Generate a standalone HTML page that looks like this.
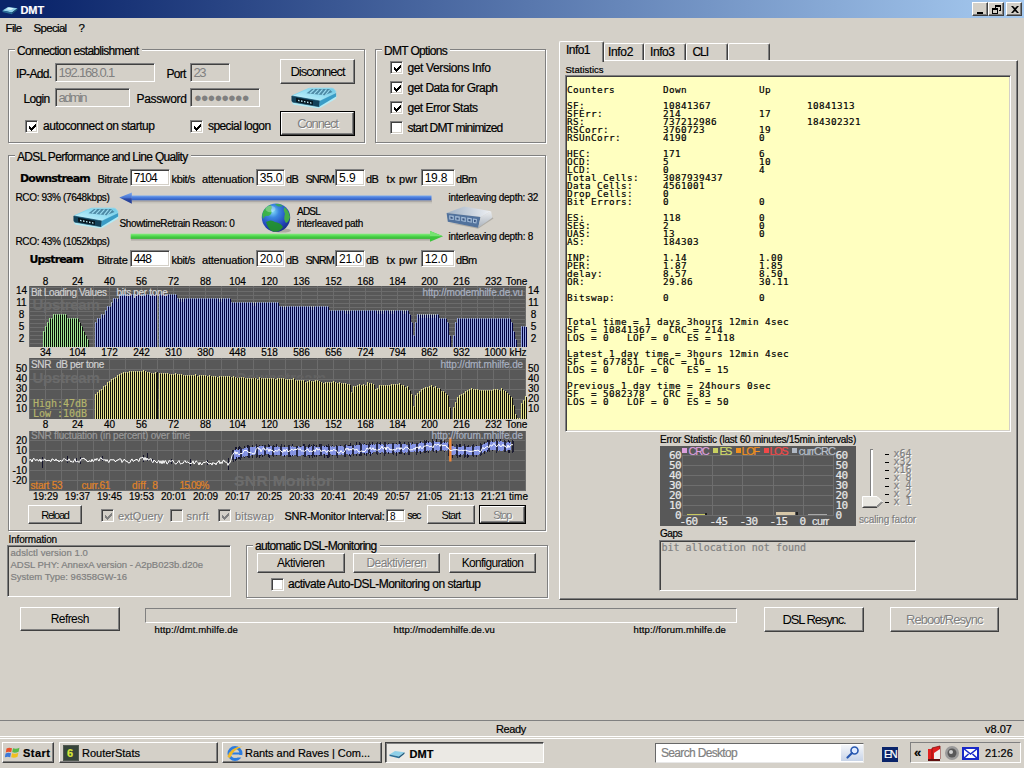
<!DOCTYPE html>
<html lang="en"><head><meta charset="utf-8"><title>DMT</title><style>
html,body{margin:0;padding:0}
body{width:1024px;height:768px;overflow:hidden;background:#D4D0C8;font:11px "Liberation Sans",sans-serif;position:relative}
.abs,.t,.grp,.cb,.btn,.inp,.sunk,.sunk1,.cap{position:absolute}
.t{white-space:pre;-webkit-text-stroke:.2px}
.mono{font:9.3px/12px "DejaVu Sans Mono","Liberation Mono",monospace;color:#000;letter-spacing:.4px}
.grp{border:1px solid #808080;box-shadow:1px 1px 0 #fff,inset 1px 1px 0 #fff}
.cb{box-sizing:border-box;border:1px solid #808080;border-right-color:#fff;border-bottom-color:#fff;box-shadow:inset 1px 1px 0 #404040,inset -1px -1px 0 #D4D0C8}
.cb svg{left:0;top:0}
.btn{box-sizing:border-box;background:#D4D0C8;border:1px solid #fff;border-right-color:#404040;border-bottom-color:#404040;box-shadow:inset -1px -1px 0 #808080;text-align:center;font-family:"Liberation Sans",sans-serif;color:#000;white-space:nowrap}
.btn.def{outline:1px solid #000;outline-offset:0}
.btn .dis{color:#808080;text-shadow:1px 1px 0 #fff}
.inp{box-sizing:border-box;border:1px solid #808080;border-right-color:#fff;border-bottom-color:#fff;box-shadow:inset 1px 1px 0 #404040,inset -1px -1px 0 #D4D0C8;font-family:"Liberation Sans",sans-serif;white-space:nowrap;overflow:hidden}
.sunk{box-sizing:border-box;border:1px solid #808080;border-right-color:#fff;border-bottom-color:#fff;box-shadow:inset 1px 1px 0 #404040,inset -1px -1px 0 #D4D0C8}
.sunk1{box-sizing:border-box;border:1px solid #808080;border-right-color:#fff;border-bottom-color:#fff}
.cap{width:16px;height:14px;box-sizing:border-box;background:#D4D0C8;border:1px solid #fff;border-right-color:#404040;border-bottom-color:#404040;box-shadow:inset -1px -1px 0 #808080}
</style></head>
<body>
<div class="abs" style="left:0;top:0;width:1024px;height:18px;background:linear-gradient(90deg,#0A246A 0%,#0A246A 3%,#A6CAF0 100%)"></div>
<svg class="abs" style="left:2px;top:4px" width="16" height="12" viewBox="0 0 16 12"><path d="M0.5 6.5L6 3l9.5 1.2L10 8.5z" fill="#8fd0e8"/><path d="M0.5 6.5L10 8.5v1.8L0.5 8z" fill="#2a6f98"/><path d="M10 8.5l5.5-4.3v1.6L10 10.3z" fill="#1d5578"/><path d="M4 5.2l3-1.6 5 .6-3 1.8z" fill="#d8f2fa"/></svg>
<div class="t" style="left:20.5px;top:2.5px;font:bold 11px/14px 'Liberation Sans',sans-serif;color:#fff;letter-spacing:-0.109px;">DMT</div>
<div class="cap" style="left:972px;top:2px"><svg width="16" height="14" viewBox="0 0 16 14" shape-rendering="crispEdges" style="position:absolute;left:0;top:0"><rect x="4" y="9" width="6" height="2" fill="#000"/></svg></div>
<div class="cap" style="left:988px;top:2px"><svg width="16" height="14" viewBox="0 0 16 14" shape-rendering="crispEdges" style="position:absolute;left:0;top:0"><path d="M6 2h6v2h-6zM6 4h1v2h-1zM11 4h1v4h-2v-1h1zM3 5h6v2h-6zM3 7h1v4h-1zM8 7h1v4h-1zM4 10h4v1h-4z" fill="#000"/></svg></div>
<div class="cap" style="left:1006px;top:2px"><svg width="16" height="14" viewBox="0 0 16 14" shape-rendering="crispEdges" style="position:absolute;left:0;top:0"><path d="M4 3h2l2 2 2-2h2l-3 3.500 3 3.500h-2l-2-2-2 2h-2l3-3.500z" fill="#000" shape-rendering="auto"/></svg></div>
<div class="t" style="left:5.5px;top:21px;font:11.5px/14px 'Liberation Sans',sans-serif;color:#000;letter-spacing:-0.633px;">File</div>
<div class="t" style="left:33.5px;top:21px;font:11.5px/14px 'Liberation Sans',sans-serif;color:#000;letter-spacing:-0.674px;">Special</div>
<div class="t" style="left:78.5px;top:21px;font:11.5px/14px 'Liberation Sans',sans-serif;color:#000;">?</div>
<div class="grp" style="left:8px;top:49px;width:355px;height:92px;"></div><div class="abs" style="left:15px;top:48px;width:126.5px;height:4px;background:#D4D0C8"></div><div class="t" style="left:17px;top:44px;font:12px/14px 'Liberation Sans',sans-serif;color:#000;letter-spacing:-0.691px;">Connection establishment</div>
<div class="t" style="left:16px;top:67px;font:12px/14px 'Liberation Sans',sans-serif;color:#000;letter-spacing:-0.647px;">IP-Add.</div>
<div class="inp" style="left:55px;top:63px;width:100px;height:19px;line-height:18px;background:#D4D0C8;color:#808080;font-size:13px;padding-left:2.5px"><span style="letter-spacing:-1.199px">192.168.0.1</span></div>
<div class="t" style="left:166.5px;top:67px;font:12px/14px 'Liberation Sans',sans-serif;color:#000;letter-spacing:-0.754px;">Port</div>
<div class="inp" style="left:190px;top:63px;width:40px;height:19px;line-height:18px;background:#D4D0C8;color:#808080;font-size:13px;padding-left:2.5px"><span style="letter-spacing:-1.384px">23</span></div>
<div class="t" style="left:23.5px;top:92px;font:12px/14px 'Liberation Sans',sans-serif;color:#000;letter-spacing:-0.675px;">Login</div>
<div class="inp" style="left:55px;top:88px;width:75px;height:19px;line-height:18px;background:#D4D0C8;color:#808080;font-size:13px;padding-left:2.5px"><span style="letter-spacing:-1.584px">admin</span></div>
<div class="t" style="left:136.5px;top:92px;font:12px/14px 'Liberation Sans',sans-serif;color:#000;letter-spacing:-0.336px;">Password</div>
<div class="inp" style="left:190px;top:88px;width:70px;height:19px;line-height:18px;background:#D4D0C8;color:#808080;font-size:13px;padding-left:3px"><span style="letter-spacing:-1.041px">●●●●●●●●</span></div>
<div class="cb" style="left:25px;top:120px;width:13px;height:13px;background:#fff;"><svg width="13" height="13" viewBox="0 0 13 13" style="position:absolute;left:0;top:0"><path d="M3 5v3l2 2l5-5v-3l-5 5z" fill="#000" shape-rendering="crispEdges"/></svg></div>
<div class="t" style="left:43px;top:119px;font:12px/14px 'Liberation Sans',sans-serif;color:#000;letter-spacing:-0.482px;">autoconnect on startup</div>
<div class="cb" style="left:190px;top:120px;width:13px;height:13px;background:#fff;"><svg width="13" height="13" viewBox="0 0 13 13" style="position:absolute;left:0;top:0"><path d="M3 5v3l2 2l5-5v-3l-5 5z" fill="#000" shape-rendering="crispEdges"/></svg></div>
<div class="t" style="left:208px;top:119px;font:12px/14px 'Liberation Sans',sans-serif;color:#000;letter-spacing:-0.582px;">special logon</div>
<div class="btn" style="left:280px;top:59px;width:75px;height:25px;line-height:24px;font-size:13px"><span><span style="letter-spacing:-1.031px">Disconnect</span></span></div>
<div class="btn def" style="left:281px;top:112px;width:73px;height:23px;line-height:22px;font-size:13px"><span class="dis"><span style="letter-spacing:-1.132px">Connect</span></span></div>
<svg class="abs" style="left:291px;top:87px" width="46" height="21.5" viewBox="0 0 46 21.500">
<defs><linearGradient id="rga" x1="0" y1="1" x2="1" y2="0"><stop offset="0" stop-color="#d4f6fd"/><stop offset=".45" stop-color="#9fe2f4"/><stop offset="1" stop-color="#6cc8e6"/></linearGradient></defs>
<path d="M1 15.500 Q1.500 17.500 3 17.800 L27 21.300 Q28.500 21.300 30 20.500 L44.500 12 Q46 10.500 45.500 8 L28 18 L1.500 13.500z" fill="#b2ecf8" opacity=".95"/>
<path d="M1.600 8.600 L17 1.700 Q18 1.200 19.500 1.200 L40.600 1.200 Q42 1.200 43 2.200 L44.600 4.200 Q45.400 5.600 44 6.400 L29.500 13.600 Q28.500 14 27.500 13.800 L1.800 9.400z" fill="url(#rga)" stroke="#8cd8ee" stroke-width="1" stroke-linejoin="round"/>
<path d="M0.800 9 L28.700 14 L28.100 19.700 L2 15.200 Q0.800 14.800 0.800 13.500z" fill="#13425a" stroke="#13425a" stroke-width=".6" stroke-linejoin="round"/>
<path d="M28.700 14 L45.100 5.900 L45.100 9.600 L28.100 19.700z" fill="#3a9cc6"/>
<path d="M5 10.800 L22 14.100 L21.800 18 L5.200 14.900z" fill="#06141c"/>
<path d="M7 12.700l1.500 .3v1.400l-1.500-.3zM10 13.300l1.500 .3v1.400l-1.500-.3zM13 13.900l1.500 .3v1.400l-1.500-.3zM16 14.500l1.500 .3v1.400l-1.500-.3zM19 15.100l1.500 .3v1.400l-1.500-.3z" fill="#b8e4f0"/>
<path d="M21 2 L38 2 L41.500 5 L33.500 8.300 L15.500 6.300z" fill="#3d7592" opacity=".8"/>
<path d="M23.500 2.300l-4.500 4M27.500 2.300l-4.500 4.600M31.500 2.300l-4.500 5M35.500 2.300l-4.500 5.500M38.500 3l-4 5" stroke="#9cdcf0" stroke-width="1.200"/>
</svg>
<div class="grp" style="left:375px;top:49px;width:169px;height:92px;"></div><div class="abs" style="left:382px;top:48px;width:68px;height:4px;background:#D4D0C8"></div><div class="t" style="left:384px;top:44px;font:12px/14px 'Liberation Sans',sans-serif;color:#000;letter-spacing:-0.679px;">DMT Options</div>
<div class="cb" style="left:390px;top:61px;width:13px;height:13px;background:#fff;"><svg width="13" height="13" viewBox="0 0 13 13" style="position:absolute;left:0;top:0"><path d="M3 5v3l2 2l5-5v-3l-5 5z" fill="#000" shape-rendering="crispEdges"/></svg></div>
<div class="t" style="left:407.5px;top:61px;font:12px/14px 'Liberation Sans',sans-serif;color:#000;letter-spacing:-0.376px;">get Versions Info</div>
<div class="cb" style="left:390px;top:81px;width:13px;height:13px;background:#fff;"><svg width="13" height="13" viewBox="0 0 13 13" style="position:absolute;left:0;top:0"><path d="M3 5v3l2 2l5-5v-3l-5 5z" fill="#000" shape-rendering="crispEdges"/></svg></div>
<div class="t" style="left:407.5px;top:81px;font:12px/14px 'Liberation Sans',sans-serif;color:#000;letter-spacing:-0.522px;">get Data for Graph</div>
<div class="cb" style="left:390px;top:101px;width:13px;height:13px;background:#fff;"><svg width="13" height="13" viewBox="0 0 13 13" style="position:absolute;left:0;top:0"><path d="M3 5v3l2 2l5-5v-3l-5 5z" fill="#000" shape-rendering="crispEdges"/></svg></div>
<div class="t" style="left:407.5px;top:101px;font:12px/14px 'Liberation Sans',sans-serif;color:#000;letter-spacing:-0.492px;">get Error Stats</div>
<div class="cb" style="left:390px;top:121px;width:13px;height:13px;background:#fff;"></div>
<div class="t" style="left:407.5px;top:121px;font:12px/14px 'Liberation Sans',sans-serif;color:#000;letter-spacing:-0.779px;">start DMT minimized</div>
<div class="grp" style="left:8px;top:155px;width:536px;height:373.5px;"></div><div class="abs" style="left:15px;top:154px;width:175.5px;height:4px;background:#D4D0C8"></div><div class="t" style="left:17px;top:150px;font:12px/14px 'Liberation Sans',sans-serif;color:#000;letter-spacing:-0.682px;">ADSL Performance and Line Quality</div>
<div class="t" style="left:20px;top:171.5px;font:bold 11px/14px 'DejaVu Sans',sans-serif;color:#000;letter-spacing:-0.827px;">Downstream</div><div class="t" style="left:97.5px;top:171.5px;font:11px/14px 'Liberation Sans',sans-serif;color:#000;letter-spacing:-0.257px;">Bitrate</div><div class="inp" style="left:130px;top:169px;width:40px;height:17px;line-height:17px;background:#fff;color:#000;font-size:12px;padding-left:2.7px"><span style="letter-spacing:-0.876px">7104</span></div><div class="t" style="left:171.5px;top:171.5px;font:11px/14px 'Liberation Sans',sans-serif;color:#000;letter-spacing:-0.365px;">kbit/s</div><div class="t" style="left:202px;top:171.5px;font:11px/14px 'Liberation Sans',sans-serif;color:#000;letter-spacing:-0.222px;">attenuation</div><div class="inp" style="left:256px;top:169px;width:29px;height:17px;line-height:17px;background:#fff;color:#000;font-size:12px;padding-left:2.7px"><span style="letter-spacing:-0.165px">35.0</span></div><div class="t" style="left:286px;top:171.5px;font:11px/14px 'Liberation Sans',sans-serif;color:#000;letter-spacing:-0.734px;">dB</div><div class="t" style="left:305.5px;top:171.5px;font:11px/14px 'Liberation Sans',sans-serif;color:#000;letter-spacing:-0.973px;">SNRM</div><div class="inp" style="left:335px;top:169px;width:30px;height:17px;line-height:17px;background:#fff;color:#000;font-size:12px;padding-left:3px"><span style="letter-spacing:-0.029px">5.9</span></div><div class="t" style="left:366px;top:171.5px;font:11px/14px 'Liberation Sans',sans-serif;color:#000;letter-spacing:-0.734px;">dB</div><div class="t" style="left:386.5px;top:171.5px;font:11px/14px 'Liberation Sans',sans-serif;color:#000;letter-spacing:0.276px;">tx pwr</div><div class="inp" style="left:421px;top:169px;width:33.5px;height:17px;line-height:17px;background:#fff;color:#000;font-size:12px;padding-left:2.7px"><span style="letter-spacing:-0.240px">19.8</span></div><div class="t" style="left:456px;top:171.5px;font:11px/14px 'Liberation Sans',sans-serif;color:#000;letter-spacing:-0.708px;">dBm</div>
<div class="t" style="left:29.5px;top:252.5px;font:bold 11px/14px 'DejaVu Sans',sans-serif;color:#000;letter-spacing:-0.861px;">Upstream</div><div class="t" style="left:97.5px;top:252.5px;font:11px/14px 'Liberation Sans',sans-serif;color:#000;letter-spacing:-0.257px;">Bitrate</div><div class="inp" style="left:130px;top:250px;width:40px;height:16.5px;line-height:16.5px;background:#fff;color:#000;font-size:12px;padding-left:2.7px"><span style="letter-spacing:-0.877px">448</span></div><div class="t" style="left:171.5px;top:252.5px;font:11px/14px 'Liberation Sans',sans-serif;color:#000;letter-spacing:-0.365px;">kbit/s</div><div class="t" style="left:202px;top:252.5px;font:11px/14px 'Liberation Sans',sans-serif;color:#000;letter-spacing:-0.222px;">attenuation</div><div class="inp" style="left:256px;top:250px;width:29px;height:16.5px;line-height:16.5px;background:#fff;color:#000;font-size:12px;padding-left:2.7px"><span style="letter-spacing:-0.165px">20.0</span></div><div class="t" style="left:286px;top:252.5px;font:11px/14px 'Liberation Sans',sans-serif;color:#000;letter-spacing:-0.734px;">dB</div><div class="t" style="left:305.5px;top:252.5px;font:11px/14px 'Liberation Sans',sans-serif;color:#000;letter-spacing:-0.973px;">SNRM</div><div class="inp" style="left:335px;top:250px;width:30px;height:16.5px;line-height:16.5px;background:#fff;color:#000;font-size:12px;padding-left:3px"><span style="letter-spacing:-0.165px">21.0</span></div><div class="t" style="left:366px;top:252.5px;font:11px/14px 'Liberation Sans',sans-serif;color:#000;letter-spacing:-0.734px;">dB</div><div class="t" style="left:386.5px;top:252.5px;font:11px/14px 'Liberation Sans',sans-serif;color:#000;letter-spacing:0.276px;">tx pwr</div><div class="inp" style="left:421px;top:250px;width:33.5px;height:16.5px;line-height:16.5px;background:#fff;color:#000;font-size:12px;padding-left:2.7px"><span style="letter-spacing:-0.240px">12.0</span></div><div class="t" style="left:456px;top:252.5px;font:11px/14px 'Liberation Sans',sans-serif;color:#000;letter-spacing:-0.708px;">dBm</div>
<div class="t" style="left:15.5px;top:190.5px;font:10px/14px 'Liberation Sans',sans-serif;color:#000;letter-spacing:-0.348px;">RCO: 93% (7648kbps)</div>
<div class="t" style="left:15.5px;top:234.5px;font:10px/14px 'Liberation Sans',sans-serif;color:#000;letter-spacing:-0.348px;">RCO: 43% (1052kbps)</div>
<div class="t" style="left:448.5px;top:190.5px;font:10px/14px 'Liberation Sans',sans-serif;color:#000;letter-spacing:-0.278px;">interleaving depth: 32</div>
<div class="t" style="left:448.5px;top:229.5px;font:10px/14px 'Liberation Sans',sans-serif;color:#000;letter-spacing:-0.266px;">interleaving depth: 8</div>
<div class="t" style="left:119.5px;top:216.5px;font:10px/14px 'Liberation Sans',sans-serif;color:#000;letter-spacing:-0.381px;">ShowtimeRetrain Reason: 0</div>
<div class="t" style="left:297px;top:204.5px;font:10px/14px 'Liberation Sans',sans-serif;color:#000;letter-spacing:-0.781px;">ADSL</div>
<div class="t" style="left:297px;top:216.5px;font:10px/14px 'Liberation Sans',sans-serif;color:#000;letter-spacing:-0.323px;">interleaved path</div>
<svg class="abs" style="left:115px;top:188px" width="335" height="58" viewBox="115 188 335 58">
<defs>
<linearGradient id="ab" x1="0" y1="0" x2="0" y2="1"><stop offset="0" stop-color="#78a8ee"/><stop offset=".45" stop-color="#4a7cdc"/><stop offset="1" stop-color="#2f5cc0"/></linearGradient>
<linearGradient id="abh" x1="0" y1="0" x2="0" y2="1"><stop offset="0" stop-color="#7aa6ec"/><stop offset=".5" stop-color="#4470d0"/><stop offset=".55" stop-color="#2c48a4"/><stop offset="1" stop-color="#243c90"/></linearGradient>
<linearGradient id="ag" x1="0" y1="0" x2="0" y2="1"><stop offset="0" stop-color="#86ee80"/><stop offset=".5" stop-color="#4cd44a"/><stop offset="1" stop-color="#34b434"/></linearGradient>
</defs>
<rect x="132" y="200.200" width="300" height="2" fill="#aeaaa6"/>
<rect x="132" y="202.200" width="300" height="1.200" fill="#c4c1ba"/>
<rect x="131.500" y="195.500" width="300" height="4.800" fill="url(#ab)"/>
<path d="M119.300 197.400 L131.800 192.500 L131.800 203.800z" fill="url(#abh)"/>
<rect x="131" y="238.800" width="300" height="1.800" fill="#b0ada6"/>
<rect x="130.700" y="233.700" width="300" height="5.200" fill="url(#ag)"/>
<path d="M430 231 L443 236.300 L430 241.800z" fill="#3cc43c"/>
<path d="M430 231 L443 236.300 L430 236.300z" fill="#74e470"/>
</svg>
<svg class="abs" style="left:72.5px;top:207.3px" width="46" height="21.5" viewBox="0 0 46 21.500">
<defs><linearGradient id="rgb" x1="0" y1="1" x2="1" y2="0"><stop offset="0" stop-color="#d4f6fd"/><stop offset=".45" stop-color="#9fe2f4"/><stop offset="1" stop-color="#6cc8e6"/></linearGradient></defs>
<path d="M1 15.500 Q1.500 17.500 3 17.800 L27 21.300 Q28.500 21.300 30 20.500 L44.500 12 Q46 10.500 45.500 8 L28 18 L1.500 13.500z" fill="#b2ecf8" opacity=".95"/>
<path d="M1.600 8.600 L17 1.700 Q18 1.200 19.500 1.200 L40.600 1.200 Q42 1.200 43 2.200 L44.600 4.200 Q45.400 5.600 44 6.400 L29.500 13.600 Q28.500 14 27.500 13.800 L1.800 9.400z" fill="url(#rgb)" stroke="#8cd8ee" stroke-width="1" stroke-linejoin="round"/>
<path d="M0.800 9 L28.700 14 L28.100 19.700 L2 15.200 Q0.800 14.800 0.800 13.500z" fill="#13425a" stroke="#13425a" stroke-width=".6" stroke-linejoin="round"/>
<path d="M28.700 14 L45.100 5.900 L45.100 9.600 L28.100 19.700z" fill="#3a9cc6"/>
<path d="M5 10.800 L22 14.100 L21.800 18 L5.200 14.900z" fill="#06141c"/>
<path d="M7 12.700l1.500 .3v1.400l-1.500-.3zM10 13.300l1.500 .3v1.400l-1.500-.3zM13 13.900l1.500 .3v1.400l-1.500-.3zM16 14.500l1.500 .3v1.400l-1.500-.3zM19 15.100l1.500 .3v1.400l-1.500-.3z" fill="#b8e4f0"/>
<path d="M21 2 L38 2 L41.500 5 L33.500 8.300 L15.500 6.300z" fill="#3d7592" opacity=".8"/>
<path d="M23.500 2.300l-4.500 4M27.500 2.300l-4.500 4.600M31.500 2.300l-4.500 5M35.500 2.300l-4.500 5.500M38.500 3l-4 5" stroke="#9cdcf0" stroke-width="1.200"/>
</svg>
<svg class="abs" style="left:260px;top:202px" width="32" height="32" viewBox="260 202 32 32">
<defs><radialGradient id="gl" cx=".38" cy=".28" r=".75"><stop offset="0" stop-color="#84dcf8"/><stop offset=".3" stop-color="#3a86e0"/><stop offset=".75" stop-color="#2244b8"/><stop offset="1" stop-color="#1a2c88"/></radialGradient>
<clipPath id="gc"><circle cx="276" cy="217.600" r="14.200"/></clipPath></defs>
<ellipse cx="282" cy="230.500" rx="9" ry="2" fill="#8c8a84" opacity=".55"/>
<circle cx="276" cy="217.600" r="14.200" fill="url(#gl)"/>
<g clip-path="url(#gc)">
<path d="M262 214 Q264 207 270 205 Q273 206 271 210 Q273 214 268 216 Q265 215 263 219z" fill="#3cb83c" opacity=".9"/>
<path d="M266 222 Q271 219 275 222 Q281 223 283 227 Q280 232 274 232 Q268 230 266 222z" fill="#229428" opacity=".9"/>
<path d="M284 207 Q289 210 290 217 Q289 222 286 223 Q283 219 285 214 Q283 210 284 207z" fill="#48b83c" opacity=".9"/>
<path d="M275 204 Q280 203 283 206 Q280 207 277 206z" fill="#3cb040" opacity=".8"/>
</g>
<ellipse cx="270.500" cy="209" rx="5" ry="3.200" fill="#fff" opacity=".28"/>
</svg>
<svg class="abs" style="left:445.800px;top:206.400px" width="48" height="23" viewBox="0 0 48 23">
<defs><linearGradient id="sw1" x1="0" y1="0" x2="1" y2="0"><stop offset="0" stop-color="#9fb0c4"/><stop offset="1" stop-color="#eef0f3"/></linearGradient>
<linearGradient id="sw2" x1="0" y1="0" x2="0" y2="1"><stop offset="0" stop-color="#eceef0"/><stop offset="1" stop-color="#aab2bc"/></linearGradient></defs>
<path d="M3 17 L32 22.800 L47.500 12.500 L46 11 L32 20z" fill="#8c8a84" opacity=".5"/>
<path d="M0.600 7 L18.200 0.600 L45.100 5.300 L34.600 11.100z" fill="url(#sw1)"/>
<path d="M0.600 7 L34.600 11.100 L32.200 21.700 L1.800 15.800z" fill="#52729c"/>
<path d="M34.600 11.100 L45.100 5.300 L46.300 11.700 L32.200 21.700z" fill="url(#sw2)"/>
<path d="M3.200 9.200l4.600.6v4.300l-4.600-.7zM9.200 10l4.600.6v4.400l-4.600-.8zM15.200 10.800l4.600.6v4.500l-4.600-.9zM21.200 11.600l4.600.6v4.600l-4.600-1zM27 12.400l4 .5-.6 4.700-3.400-.7z" fill="#a4bcd8"/>
<path d="M4.400 10.600l2.200.3v2l-2.200-.35zM10.400 11.400l2.200.3v2.100l-2.200-.4zM16.400 12.200l2.200.3v2.200l-2.200-.45zM22.400 13l2.200.3v2.300l-2.200-.5zM28 13.800l1.900.25-.3 2.300-1.600-.35z" fill="#3a5682"/>
</svg>
<svg class="abs" style="left:0;top:0" width="560" height="540" viewBox="0 0 560 540" shape-rendering="crispEdges"><rect x="29" y="286" width="496.5" height="61" fill="#585858"/><path d="M29.5 286V347M45.5 286V347M61.5 286V347M77.5 286V347M93.5 286V347M109.5 286V347M125.5 286V347M141.5 286V347M157.5 286V347M173.5 286V347M189.5 286V347M205.5 286V347M221.5 286V347M237.5 286V347M253.5 286V347M269.5 286V347M285.5 286V347M301.5 286V347M317.5 286V347M333.5 286V347M349.5 286V347M365.5 286V347M381.5 286V347M397.5 286V347M413.5 286V347M429.5 286V347M445.5 286V347M461.5 286V347M477.5 286V347M493.5 286V347M509.5 286V347M525.5 286V347M29 287.5H525.5M29 291.5H525.5M29 295.5H525.5M29 299.5H525.5M29 303.5H525.5M29 307.5H525.5M29 311.5H525.5M29 315.5H525.5M29 319.5H525.5M29 323.5H525.5M29 327.5H525.5M29 331.5H525.5M29 335.5H525.5M29 339.5H525.5M29 343.5H525.5" stroke="#6c6c6c" stroke-width="1" fill="none"/><path d="M44.5 332V347M46.5 327V347M48.5 323V347M50.5 319V347M52.5 319V347M54.5 315V347M56.5 315V347M58.5 315V347M60.5 315V347M62.5 315V347M64.5 315V347M66.5 315V347M68.5 319V347M70.5 319V347M72.5 319V347M74.5 319V347M76.5 319V347M78.5 319V347M80.5 323V347M82.5 327V347M84.5 332V347M86.5 336V347M88.5 340V347" stroke="#061006" stroke-width="1"/><path d="M43.5 331V347M45.5 326V347M47.5 322V347M49.5 318V347M51.5 318V347M53.5 314V347M55.5 314V347M57.5 314V347M59.5 314V347M61.5 314V347M63.5 314V347M65.5 314V347M67.5 318V347M69.5 318V347M71.5 318V347M73.5 318V347M75.5 318V347M77.5 318V347M79.5 322V347M81.5 326V347M83.5 331V347M85.5 335V347M87.5 339V347" stroke="#a0e494" stroke-width="1"/><path d="M96.5 323V347M98.5 319V347M100.5 319V347M102.5 315V347M104.5 315V347M106.5 311V347M108.5 307V347M110.5 307V347M112.5 303V347M114.5 299V347M116.5 299V347M118.5 299V347M120.5 295V347M122.5 295V347M124.5 295V347M126.5 295V347M128.5 295V347M130.5 295V347M132.5 295V347M134.5 295V347M136.5 295V347M138.5 295V347M140.5 295V347M142.5 295V347M144.5 295V347M146.5 295V347M148.5 295V347M150.5 295V347M152.5 295V347M154.5 295V347M156.5 295V347M160.5 295V347M162.5 295V347M164.5 295V347M166.5 295V347M168.5 295V347M170.5 295V347M172.5 295V347M174.5 295V347M176.5 295V347M178.5 299V347M180.5 299V347M182.5 299V347M184.5 299V347M186.5 299V347M188.5 299V347M190.5 299V347M192.5 299V347M194.5 299V347M196.5 299V347M198.5 299V347M200.5 299V347M202.5 299V347M204.5 299V347M206.5 299V347M208.5 299V347M210.5 299V347M212.5 299V347M214.5 299V347M216.5 299V347M218.5 299V347M220.5 299V347M222.5 299V347M224.5 299V347M226.5 299V347M228.5 299V347M230.5 299V347M232.5 303V347M234.5 303V347M236.5 303V347M238.5 303V347M240.5 303V347M242.5 303V347M244.5 303V347M246.5 303V347M248.5 303V347M250.5 303V347M252.5 303V347M254.5 303V347M256.5 303V347M258.5 303V347M260.5 303V347M262.5 303V347M264.5 303V347M266.5 303V347M268.5 303V347M270.5 303V347M272.5 303V347M274.5 303V347M276.5 303V347M278.5 303V347M280.5 307V347M282.5 307V347M284.5 307V347M286.5 307V347M288.5 307V347M290.5 307V347M292.5 307V347M294.5 307V347M296.5 307V347M298.5 307V347M300.5 307V347M302.5 307V347M304.5 307V347M306.5 307V347M308.5 307V347M310.5 307V347M312.5 307V347M314.5 307V347M316.5 307V347M318.5 307V347M320.5 307V347M322.5 307V347M324.5 307V347M326.5 307V347M328.5 307V347M330.5 311V347M332.5 311V347M334.5 311V347M336.5 311V347M338.5 311V347M340.5 311V347M342.5 311V347M344.5 311V347M346.5 311V347M348.5 311V347M350.5 311V347M352.5 311V347M354.5 311V347M356.5 311V347M358.5 311V347M360.5 311V347M362.5 311V347M364.5 311V347M366.5 311V347M368.5 311V347M370.5 311V347M372.5 311V347M374.5 311V347M376.5 311V347M378.5 311V347M380.5 311V347M382.5 311V347M384.5 311V347M386.5 311V347M388.5 311V347M390.5 311V347M392.5 311V347M394.5 311V347M396.5 311V347M398.5 311V347M400.5 311V347M402.5 311V347M404.5 311V347M406.5 311V347M408.5 311V347M410.5 315V347M412.5 323V347M414.5 336V347M416.5 323V347M418.5 315V347M420.5 315V347M422.5 315V347M424.5 315V347M426.5 315V347M428.5 315V347M430.5 315V347M432.5 315V347M434.5 315V347M436.5 315V347M438.5 315V347M440.5 319V347M442.5 319V347M444.5 319V347M446.5 319V347M448.5 323V347M450.5 336V347M454.5 336V347M456.5 323V347M458.5 319V347M460.5 319V347M462.5 319V347M464.5 319V347M466.5 319V347M468.5 319V347M470.5 319V347M472.5 319V347M474.5 319V347M476.5 319V347M478.5 319V347M480.5 319V347M482.5 319V347M484.5 319V347M486.5 319V347M488.5 319V347M490.5 319V347M492.5 319V347M494.5 319V347M496.5 319V347M498.5 319V347M500.5 319V347M502.5 319V347M504.5 319V347M506.5 319V347M508.5 319V347M510.5 319V347M512.5 323V347M514.5 332V347M516.5 340V347M522.5 327V347M524.5 327V347M526.5 327V347" stroke="#020244" stroke-width="1"/><path d="M95.5 322V347M97.5 318V347M99.5 318V347M101.5 314V347M103.5 314V347M105.5 310V347M107.5 306V347M109.5 306V347M111.5 302V347M113.5 298V347M115.5 298V347M117.5 298V347M119.5 294V347M121.5 294V347M123.5 294V347M125.5 294V347M127.5 294V347M129.5 294V347M131.5 294V347M133.5 294V347M135.5 294V347M137.5 294V347M139.5 294V347M141.5 294V347M143.5 294V347M145.5 294V347M147.5 294V347M149.5 294V347M151.5 294V347M153.5 294V347M155.5 294V347M159.5 294V347M161.5 294V347M163.5 294V347M165.5 294V347M167.5 294V347M169.5 294V347M171.5 294V347M173.5 294V347M175.5 294V347M177.5 298V347M179.5 298V347M181.5 298V347M183.5 298V347M185.5 298V347M187.5 298V347M189.5 298V347M191.5 298V347M193.5 298V347M195.5 298V347M197.5 298V347M199.5 298V347M201.5 298V347M203.5 298V347M205.5 298V347M207.5 298V347M209.5 298V347M211.5 298V347M213.5 298V347M215.5 298V347M217.5 298V347M219.5 298V347M221.5 298V347M223.5 298V347M225.5 298V347M227.5 298V347M229.5 298V347M231.5 302V347M233.5 302V347M235.5 302V347M237.5 302V347M239.5 302V347M241.5 302V347M243.5 302V347M245.5 302V347M247.5 302V347M249.5 302V347M251.5 302V347M253.5 302V347M255.5 302V347M257.5 302V347M259.5 302V347M261.5 302V347M263.5 302V347M265.5 302V347M267.5 302V347M269.5 302V347M271.5 302V347M273.5 302V347M275.5 302V347M277.5 302V347M279.5 306V347M281.5 306V347M283.5 306V347M285.5 306V347M287.5 306V347M289.5 306V347M291.5 306V347M293.5 306V347M295.5 306V347M297.5 306V347M299.5 306V347M301.5 306V347M303.5 306V347M305.5 306V347M307.5 306V347M309.5 306V347M311.5 306V347M313.5 306V347M315.5 306V347M317.5 306V347M319.5 306V347M321.5 306V347M323.5 306V347M325.5 306V347M327.5 306V347M329.5 310V347M331.5 310V347M333.5 310V347M335.5 310V347M337.5 310V347M339.5 310V347M341.5 310V347M343.5 310V347M345.5 310V347M347.5 310V347M349.5 310V347M351.5 310V347M353.5 310V347M355.5 310V347M357.5 310V347M359.5 310V347M361.5 310V347M363.5 310V347M365.5 310V347M367.5 310V347M369.5 310V347M371.5 310V347M373.5 310V347M375.5 310V347M377.5 310V347M379.5 310V347M381.5 310V347M383.5 310V347M385.5 310V347M387.5 310V347M389.5 310V347M391.5 310V347M393.5 310V347M395.5 310V347M397.5 310V347M399.5 310V347M401.5 310V347M403.5 310V347M405.5 310V347M407.5 310V347M409.5 314V347M411.5 322V347M413.5 335V347M415.5 322V347M417.5 314V347M419.5 314V347M421.5 314V347M423.5 314V347M425.5 314V347M427.5 314V347M429.5 314V347M431.5 314V347M433.5 314V347M435.5 314V347M437.5 314V347M439.5 318V347M441.5 318V347M443.5 318V347M445.5 318V347M447.5 322V347M449.5 335V347M453.5 335V347M455.5 322V347M457.5 318V347M459.5 318V347M461.5 318V347M463.5 318V347M465.5 318V347M467.5 318V347M469.5 318V347M471.5 318V347M473.5 318V347M475.5 318V347M477.5 318V347M479.5 318V347M481.5 318V347M483.5 318V347M485.5 318V347M487.5 318V347M489.5 318V347M491.5 318V347M493.5 318V347M495.5 318V347M497.5 318V347M499.5 318V347M501.5 318V347M503.5 318V347M505.5 318V347M507.5 318V347M509.5 318V347M511.5 322V347M513.5 331V347M515.5 339V347M521.5 326V347M523.5 326V347M525.5 326V347" stroke="#98a8e0" stroke-width="1"/><path d="M103.5 314V318M111.5 302V306M117.5 298V302M179.5 298V302M181.5 298V302M183.5 298V302M219.5 298V302M221.5 298V302M253.5 302V306M255.5 302V306M283.5 306V310M285.5 306V310M311.5 306V310M313.5 306V310M345.5 310V314M347.5 310V314M349.5 310V314M377.5 310V314M379.5 310V314M381.5 310V314M383.5 310V314M389.5 310V314M391.5 310V314M393.5 310V314M403.5 310V314M405.5 310V314M419.5 314V318M421.5 314V318M423.5 314V318M425.5 314V318M427.5 314V318M429.5 314V318M431.5 314V318M433.5 314V318M435.5 314V318" stroke="#b8c4d8" stroke-width="1"/><path d="M157.5 294V347" stroke="#a0a0a0" stroke-width="1"/></svg>
<svg class="abs" style="left:0;top:0" width="560" height="540" viewBox="0 0 560 540" shape-rendering="crispEdges"><rect x="29" y="358" width="496.5" height="61" fill="#585858"/><path d="M29.5 358V419M45.5 358V419M61.5 358V419M77.5 358V419M93.5 358V419M109.5 358V419M125.5 358V419M141.5 358V419M157.5 358V419M173.5 358V419M189.5 358V419M205.5 358V419M221.5 358V419M237.5 358V419M253.5 358V419M269.5 358V419M285.5 358V419M301.5 358V419M317.5 358V419M333.5 358V419M349.5 358V419M365.5 358V419M381.5 358V419M397.5 358V419M413.5 358V419M429.5 358V419M445.5 358V419M461.5 358V419M477.5 358V419M493.5 358V419M509.5 358V419M525.5 358V419M29 359.5H525.5M29 369.5H525.5M29 379.5H525.5M29 389.5H525.5M29 399.5H525.5M29 409.5H525.5" stroke="#6c6c6c" stroke-width="1" fill="none"/><path d="M96.5 395V419M98.5 393V419M100.5 391V419M102.5 390V419M104.5 387V419M106.5 386V419M108.5 383V419M110.5 382V419M112.5 380V419M114.5 379V419M116.5 378V419M118.5 376V419M120.5 375V419M122.5 374V419M124.5 373V419M126.5 373V419M128.5 373V419M130.5 372V419M132.5 372V419M134.5 372V419M136.5 372V419M138.5 372V419M140.5 372V419M142.5 372V419M144.5 371V419M146.5 372V419M148.5 373V419M150.5 373V419M152.5 374V419M154.5 374V419M156.5 373V419M160.5 374V419M162.5 374V419M164.5 374V419M166.5 374V419M168.5 374V419M170.5 375V419M172.5 375V419M174.5 375V419M176.5 374V419M178.5 375V419M180.5 375V419M182.5 375V419M184.5 376V419M186.5 376V419M188.5 376V419M190.5 376V419M192.5 376V419M194.5 376V419M196.5 375V419M198.5 377V419M200.5 376V419M202.5 376V419M204.5 376V419M206.5 376V419M208.5 377V419M210.5 376V419M212.5 377V419M214.5 377V419M216.5 377V419M218.5 378V419M220.5 377V419M222.5 377V419M224.5 377V419M226.5 377V419M228.5 377V419M230.5 377V419M232.5 378V419M234.5 377V419M236.5 378V419M238.5 377V419M240.5 378V419M242.5 378V419M244.5 378V419M246.5 379V419M248.5 379V419M250.5 379V419M252.5 379V419M254.5 378V419M256.5 379V419M258.5 380V419M260.5 378V419M262.5 379V419M264.5 379V419M266.5 379V419M268.5 379V419M270.5 379V419M272.5 379V419M274.5 379V419M276.5 380V419M278.5 379V419M280.5 379V419M282.5 379V419M284.5 379V419M286.5 380V419M288.5 380V419M290.5 380V419M292.5 380V419M294.5 379V419M296.5 381V419M298.5 381V419M300.5 381V419M302.5 381V419M304.5 381V419M306.5 383V419M308.5 382V419M310.5 381V419M312.5 382V419M314.5 382V419M316.5 381V419M318.5 381V419M320.5 382V419M322.5 383V419M324.5 384V419M326.5 383V419M328.5 383V419M330.5 383V419M332.5 383V419M334.5 382V419M336.5 383V419M338.5 384V419M340.5 383V419M342.5 384V419M344.5 384V419M346.5 384V419M348.5 385V419M350.5 385V419M352.5 393V419M354.5 387V419M356.5 387V419M358.5 386V419M360.5 385V419M362.5 386V419M364.5 385V419M366.5 386V419M368.5 383V419M370.5 384V419M372.5 384V419M374.5 385V419M376.5 390V419M378.5 389V419M380.5 386V419M382.5 386V419M384.5 386V419M386.5 386V419M388.5 386V419M390.5 386V419M392.5 385V419M394.5 385V419M396.5 385V419M398.5 385V419M400.5 384V419M402.5 386V419M404.5 386V419M406.5 388V419M408.5 387V419M410.5 391V419M412.5 395V419M414.5 407V419M416.5 396V419M418.5 394V419M420.5 392V419M422.5 390V419M424.5 389V419M426.5 388V419M428.5 388V419M430.5 387V419M432.5 386V419M434.5 388V419M436.5 387V419M438.5 389V419M440.5 389V419M442.5 392V419M444.5 392V419M446.5 394V419M448.5 396V419M450.5 408V419M454.5 408V419M456.5 403V419M458.5 398V419M460.5 396V419M462.5 395V419M464.5 394V419M466.5 392V419M468.5 391V419M470.5 390V419M472.5 389V419M474.5 390V419M476.5 390V419M478.5 390V419M480.5 391V419M482.5 391V419M484.5 391V419M486.5 391V419M488.5 391V419M490.5 391V419M492.5 391V419M494.5 390V419M496.5 390V419M498.5 390V419M500.5 391V419M502.5 389V419M504.5 391V419M506.5 392V419M508.5 394V419M510.5 396V419M512.5 398V419M514.5 406V419M516.5 415V419M518.5 419V419M520.5 419V419M522.5 404V419M524.5 401V419M526.5 397V419" stroke="#0e0e06" stroke-width="1"/><path d="M95.5 394V419M97.5 392V419M99.5 390V419M101.5 389V419M103.5 386V419M105.5 385V419M107.5 382V419M109.5 381V419M111.5 379V419M113.5 378V419M115.5 377V419M117.5 375V419M119.5 374V419M121.5 373V419M123.5 372V419M125.5 372V419M127.5 372V419M129.5 371V419M131.5 371V419M133.5 371V419M135.5 371V419M137.5 371V419M139.5 371V419M141.5 371V419M143.5 370V419M145.5 371V419M147.5 372V419M149.5 372V419M151.5 373V419M153.5 373V419M155.5 372V419M159.5 373V419M161.5 373V419M163.5 373V419M165.5 373V419M167.5 373V419M169.5 374V419M171.5 374V419M173.5 374V419M175.5 373V419M177.5 374V419M179.5 374V419M181.5 374V419M183.5 375V419M185.5 375V419M187.5 375V419M189.5 375V419M191.5 375V419M193.5 375V419M195.5 374V419M197.5 376V419M199.5 375V419M201.5 375V419M203.5 375V419M205.5 375V419M207.5 376V419M209.5 375V419M211.5 376V419M213.5 376V419M215.5 376V419M217.5 377V419M219.5 376V419M221.5 376V419M223.5 376V419M225.5 376V419M227.5 376V419M229.5 376V419M231.5 377V419M233.5 376V419M235.5 377V419M237.5 376V419M239.5 377V419M241.5 377V419M243.5 377V419M245.5 378V419M247.5 378V419M249.5 378V419M251.5 378V419M253.5 377V419M255.5 378V419M257.5 379V419M259.5 377V419M261.5 378V419M263.5 378V419M265.5 378V419M267.5 378V419M269.5 378V419M271.5 378V419M273.5 378V419M275.5 379V419M277.5 378V419M279.5 378V419M281.5 378V419M283.5 378V419M285.5 379V419M287.5 379V419M289.5 379V419M291.5 379V419M293.5 378V419M295.5 380V419M297.5 380V419M299.5 380V419M301.5 380V419M303.5 380V419M305.5 382V419M307.5 381V419M309.5 380V419M311.5 381V419M313.5 381V419M315.5 380V419M317.5 380V419M319.5 381V419M321.5 382V419M323.5 383V419M325.5 382V419M327.5 382V419M329.5 382V419M331.5 382V419M333.5 381V419M335.5 382V419M337.5 383V419M339.5 382V419M341.5 383V419M343.5 383V419M345.5 383V419M347.5 384V419M349.5 384V419M351.5 392V419M353.5 386V419M355.5 386V419M357.5 385V419M359.5 384V419M361.5 385V419M363.5 384V419M365.5 385V419M367.5 382V419M369.5 383V419M371.5 383V419M373.5 384V419M375.5 389V419M377.5 388V419M379.5 385V419M381.5 385V419M383.5 385V419M385.5 385V419M387.5 385V419M389.5 385V419M391.5 384V419M393.5 384V419M395.5 384V419M397.5 384V419M399.5 383V419M401.5 385V419M403.5 385V419M405.5 387V419M407.5 386V419M409.5 390V419M411.5 394V419M413.5 406V419M415.5 395V419M417.5 393V419M419.5 391V419M421.5 389V419M423.5 388V419M425.5 387V419M427.5 387V419M429.5 386V419M431.5 385V419M433.5 387V419M435.5 386V419M437.5 388V419M439.5 388V419M441.5 391V419M443.5 391V419M445.5 393V419M447.5 395V419M449.5 407V419M453.5 407V419M455.5 402V419M457.5 397V419M459.5 395V419M461.5 394V419M463.5 393V419M465.5 391V419M467.5 390V419M469.5 389V419M471.5 388V419M473.5 389V419M475.5 389V419M477.5 389V419M479.5 390V419M481.5 390V419M483.5 390V419M485.5 390V419M487.5 390V419M489.5 390V419M491.5 390V419M493.5 389V419M495.5 389V419M497.5 389V419M499.5 390V419M501.5 388V419M503.5 390V419M505.5 391V419M507.5 393V419M509.5 395V419M511.5 397V419M513.5 405V419M515.5 414V419M517.5 418V419M519.5 418V419M521.5 403V419M523.5 400V419M525.5 396V419" stroke="#e6e28e" stroke-width="1"/><path d="M157.5 372V419" stroke="#1a1a10" stroke-width="1"/></svg>
<svg class="abs" style="left:0;top:0" width="560" height="540" viewBox="0 0 560 540"><g shape-rendering="crispEdges"><rect x="29" y="431" width="496.5" height="60" fill="#585858"/><path d="M29.5 431V491M45.5 431V491M61.5 431V491M77.5 431V491M93.5 431V491M109.5 431V491M125.5 431V491M141.5 431V491M157.5 431V491M173.5 431V491M189.5 431V491M205.5 431V491M221.5 431V491M237.5 431V491M253.5 431V491M269.5 431V491M285.5 431V491M301.5 431V491M317.5 431V491M333.5 431V491M349.5 431V491M365.5 431V491M381.5 431V491M397.5 431V491M413.5 431V491M429.5 431V491M445.5 431V491M461.5 431V491M477.5 431V491M493.5 431V491M509.5 431V491M525.5 431V491M29 440.5H525.5M29 450.5H525.5M29 460.5H525.5M29 470.5H525.5M29 480.5H525.5M29 490.5H525.5" stroke="#6c6c6c" stroke-width="1" fill="none"/></g><path d="M67.5 456.447V462.551M76.5 457.628V463.261M80.5 457.102V464.405M102.5 456.398V461.333M143.5 455.142V461.796M152.5 458.945V463.023M168.5 460.711V464.343M171.5 458.72V464.238M190.5 458.941V466.192M207.5 460.368V465.06M42.500 457V468M147.500 453V461M228.500 458V470M235.5 447.2V460.8M236.5 447.3V459.9M238.5 446.8V458.9M239.5 446.2V458.7M244.5 446.3V458.0M247.5 445.0V457.4M252.5 444.6V457.9M259.5 445.0V457.6M260.5 445.8V456.4M262.5 444.8V456.8M268.5 444.4V456.8M269.5 444.5V457.8M274.5 445.9V455.4M276.5 444.2V455.5M284.5 444.6V456.7M290.5 446.2V457.3M292.5 444.2V456.1M300.5 446.0V455.7M303.5 443.9V455.5M308.5 445.3V455.5M309.5 444.4V457.7M311.5 444.8V456.3M314.5 445.2V457.4M316.5 444.6V457.0M319.5 443.7V455.5M324.5 446.0V458.0M326.5 445.1V456.1M327.5 445.7V457.8M332.5 444.5V455.8M340.5 445.1V455.4M348.5 445.0V454.4M349.5 445.0V456.3M350.5 443.2V456.9M356.5 442.3V456.0M359.5 442.3V456.4M364.5 442.8V454.5M366.5 444.2V456.1M370.5 444.0V455.7M372.5 442.2V454.2M379.5 442.6V452.9M380.5 442.3V453.6M388.5 442.9V454.0M396.5 443.1V455.6M399.5 441.4V453.5M404.5 442.1V454.5M412.5 442.0V452.3M420.5 440.9V453.7M426.5 439.8V451.5M428.5 441.1V452.7M436.5 439.3V452.7M444.5 439.6V451.7M450.5 443.9V456.4M452.5 444.3V457.6M459.5 444.3V456.8M460.5 444.1V456.6M467.5 445.8V457.6M468.5 445.2V456.8M476.5 445.1V457.3M484.5 442.0V453.6M487.5 440.0V451.8M492.5 439.0V451.2M500.5 439.1V450.6M508.5 439.6V452.8M509.5 441.3V453.4" stroke="#14142c" stroke-width="1" shape-rendering="crispEdges"/><path d="M232.5 451.8V459.7M233.5 450.8V459.1M234.5 449.8V459.1M235.5 449.8V458.8M236.5 449.2V457.2M237.5 450.0V457.5M238.5 449.6V457.4M239.5 449.1V456.9M240.5 448.3V457.7M241.5 448.2V456.8M242.5 448.7V456.7M243.5 448.6V456.1M244.5 448.2V456.9M245.5 448.4V456.2M246.5 447.4V456.2M247.5 448.2V455.6M248.5 447.2V455.6M249.5 447.3V456.0M250.5 446.7V456.2M251.5 447.1V455.2M252.5 446.5V455.2M253.5 446.9V454.6M254.5 446.8V455.0M255.5 446.2V454.4M256.5 446.9V455.1M257.5 446.7V453.9M258.5 446.5V455.1M259.5 446.1V454.9M260.5 445.9V455.0M261.5 446.0V454.3M262.5 446.3V454.7M263.5 445.9V455.2M264.5 446.0V454.6M265.5 446.7V454.5M266.5 446.9V454.1M267.5 446.8V454.3M268.5 447.0V454.2M269.5 446.5V455.4M270.5 445.9V455.0M271.5 446.1V454.8M272.5 446.0V454.3M273.5 446.6V454.9M274.5 447.3V454.9M275.5 447.2V455.0M276.5 447.1V454.7M277.5 446.3V455.1M278.5 447.1V455.0M279.5 446.9V454.9M280.5 447.2V454.5M281.5 446.6V454.9M282.5 447.1V455.7M283.5 447.0V455.6M284.5 447.3V454.6M285.5 447.3V455.7M286.5 446.9V454.5M287.5 447.1V454.7M288.5 446.8V455.6M289.5 446.4V455.1M290.5 446.4V455.1M291.5 446.8V455.9M292.5 446.4V455.2M293.5 447.3V455.6M294.5 446.6V454.9M295.5 446.9V454.8M296.5 447.5V454.8M297.5 447.0V455.5M298.5 446.3V455.8M299.5 446.8V455.8M300.5 447.1V455.8M301.5 446.5V455.4M302.5 446.3V455.4M303.5 446.3V455.0M304.5 447.5V455.6M305.5 447.0V454.6M306.5 446.7V455.6M307.5 446.9V455.3M308.5 447.5V455.3M309.5 447.3V455.0M310.5 446.6V454.9M311.5 446.2V454.5M312.5 446.2V454.4M313.5 446.8V455.6M314.5 446.2V454.5M315.5 447.1V454.6M316.5 447.2V454.6M317.5 446.9V455.1M318.5 447.0V455.0M319.5 446.5V454.9M320.5 446.0V455.5M321.5 447.0V455.0M322.5 446.4V455.3M323.5 446.2V454.4M324.5 446.5V454.4M325.5 446.4V455.0M326.5 446.9V454.7M327.5 446.5V455.0M328.5 446.8V454.2M329.5 446.9V454.1M330.5 446.0V454.3M331.5 446.9V455.2M332.5 446.1V455.3M333.5 446.7V455.4M334.5 447.2V454.8M335.5 446.1V454.6M336.5 446.7V454.5M337.5 446.2V455.2M338.5 446.4V454.8M339.5 446.2V454.8M340.5 446.3V454.6M341.5 445.8V454.3M342.5 446.1V454.7M343.5 446.8V455.2M344.5 446.5V454.1M345.5 445.9V453.8M346.5 445.4V454.4M347.5 446.0V454.2M348.5 445.7V454.7M349.5 446.1V454.1M350.5 446.2V454.7M351.5 445.8V454.1M352.5 445.1V453.2M353.5 445.0V454.4M354.5 445.0V453.6M355.5 445.6V453.6M356.5 444.7V453.8M357.5 445.3V453.4M358.5 444.6V453.7M359.5 444.7V453.6M360.5 444.7V452.7M361.5 445.5V453.9M362.5 444.3V453.2M363.5 445.4V452.8M364.5 444.4V453.0M365.5 445.4V453.8M366.5 444.7V453.1M367.5 445.3V453.4M368.5 444.8V452.5M369.5 444.2V453.6M370.5 444.8V452.3M371.5 444.1V453.5M372.5 445.1V453.2M373.5 444.1V452.1M374.5 444.8V452.2M375.5 444.4V452.2M376.5 444.1V452.4M377.5 443.7V453.0M378.5 444.2V452.3M379.5 443.6V452.6M380.5 444.5V453.0M381.5 444.2V452.2M382.5 444.0V451.9M383.5 444.9V452.6M384.5 444.3V452.0M385.5 443.7V453.1M386.5 444.3V451.9M387.5 444.8V453.0M388.5 444.4V452.3M389.5 443.7V453.2M390.5 443.7V452.6M391.5 443.5V452.6M392.5 444.1V452.6M393.5 443.9V452.1M394.5 444.2V452.2M395.5 444.4V452.8M396.5 444.3V452.3M397.5 444.8V453.2M398.5 443.8V452.0M399.5 443.9V452.2M400.5 444.1V451.8M401.5 444.9V452.2M402.5 443.5V452.1M403.5 444.3V452.7M404.5 444.4V453.0M405.5 443.8V452.0M406.5 444.5V453.1M407.5 444.5V452.0M408.5 443.4V452.9M409.5 444.6V452.1M410.5 443.4V451.9M411.5 444.5V451.7M412.5 443.7V451.6M413.5 443.5V451.7M414.5 444.2V451.4M415.5 443.8V451.9M416.5 443.2V451.1M417.5 443.5V451.7M418.5 443.8V452.1M419.5 443.0V450.9M420.5 443.4V450.9M421.5 442.4V451.5M422.5 442.7V451.9M423.5 443.2V451.0M424.5 443.0V451.3M425.5 443.1V451.4M426.5 442.6V451.0M427.5 442.3V450.2M428.5 443.0V450.8M429.5 442.0V450.1M430.5 442.4V451.1M431.5 442.6V450.1M432.5 442.3V450.7M433.5 442.1V450.6M434.5 441.4V450.8M435.5 441.5V450.2M436.5 442.2V450.4M437.5 441.6V450.6M438.5 441.9V450.7M439.5 442.1V450.4M440.5 441.8V450.3M441.5 442.6V451.3M442.5 442.7V450.1M443.5 441.8V450.1M444.5 442.8V450.8M445.5 442.1V450.1M446.5 442.5V450.5M447.5 442.3V450.4M448.5 444.1V453.1M449.5 447.2V454.7M450.5 446.4V454.3M451.5 445.9V454.8M452.5 446.0V455.0M453.5 445.9V455.0M454.5 446.7V455.3M455.5 447.1V454.1M456.5 446.2V455.1M457.5 445.8V454.9M458.5 446.5V455.3M459.5 446.8V454.7M460.5 446.7V454.3M461.5 446.5V455.4M462.5 445.8V455.0M463.5 446.1V454.3M464.5 446.6V454.7M465.5 446.8V455.1M466.5 446.6V454.8M467.5 447.1V454.2M468.5 446.7V454.6M469.5 447.0V455.0M470.5 446.8V454.8M471.5 446.0V455.4M472.5 446.5V455.2M473.5 446.3V454.5M474.5 446.6V455.3M475.5 446.0V455.3M476.5 446.1V454.6M477.5 446.4V455.1M478.5 446.0V455.4M479.5 446.2V454.3M480.5 445.4V454.9M481.5 445.3V453.6M482.5 445.1V453.3M483.5 443.5V452.3M484.5 443.6V451.1M485.5 443.0V450.8M486.5 442.5V451.6M487.5 442.1V450.4M488.5 441.9V450.8M489.5 441.8V450.6M490.5 441.6V449.5M491.5 441.3V449.7M492.5 441.9V449.7M493.5 441.8V450.3M494.5 442.3V449.9M495.5 441.2V449.5M496.5 441.8V450.7M497.5 442.5V450.5M498.5 441.3V450.8M499.5 442.4V450.0M500.5 441.4V450.8M501.5 441.3V450.8M502.5 442.3V450.6M503.5 441.7V449.5M504.5 442.1V450.2M505.5 441.8V450.1M506.5 442.5V450.8M507.5 442.4V449.8M508.5 442.1V450.1M509.5 442.6V450.1M510.5 441.6V449.8" stroke="#8c9cf4" stroke-width="1" shape-rendering="crispEdges" opacity=".9"/><path d="M232.5 450.1V460.4M233.5 449.5V462.3M240.5 447.1V460.1M241.5 447.5V457.9M248.5 445.2V457.6M249.5 445.6V458.3M256.5 443.9V457.7M257.5 445.5V456.5M264.5 444.9V456.3M265.5 444.9V454.9M272.5 445.7V455.7M273.5 445.3V457.3M280.5 445.8V455.5M281.5 443.9V455.4M288.5 444.9V456.9M289.5 444.8V456.8M296.5 446.3V456.2M297.5 446.2V456.9M304.5 444.4V456.6M305.5 446.3V456.9M312.5 445.8V457.6M313.5 444.3V455.7M320.5 444.0V455.6M321.5 444.3V456.0M328.5 444.1V457.7M329.5 445.8V456.8M336.5 445.2V456.1M337.5 445.9V457.6M344.5 445.0V456.6M345.5 444.4V456.5M352.5 444.9V454.2M353.5 444.8V455.9M360.5 442.9V455.5M361.5 443.7V456.2M368.5 444.1V453.5M369.5 442.4V453.2M376.5 443.2V453.9M377.5 441.5V455.1M384.5 441.7V455.5M385.5 441.8V454.2M392.5 442.9V454.1M393.5 442.9V454.6M400.5 441.6V454.0M401.5 443.6V453.5M408.5 442.3V454.6M409.5 443.5V455.0M416.5 442.7V454.6M417.5 442.5V452.7M424.5 439.8V453.3M425.5 441.2V453.1M432.5 439.2V450.9M433.5 440.8V452.1M440.5 440.1V450.8M441.5 439.7V451.1M448.5 443.7V455.9M449.5 444.6V456.2M456.5 443.8V455.6M457.5 444.6V457.7M464.5 444.1V457.8M465.5 445.6V457.3M472.5 444.9V455.8M473.5 444.4V457.0M480.5 443.4V456.0M481.5 443.5V455.3M488.5 439.5V451.4M489.5 440.4V451.7M496.5 439.1V453.0M497.5 441.2V451.3M504.5 439.8V451.9M505.5 440.5V451.8M512.5 440.4V453.2M513.5 441.1V451.8" stroke="#14142c" stroke-width="1" shape-rendering="crispEdges" opacity=".85"/><path d="M450.300 437.500V461.500" stroke="#f08838" stroke-width="2.400"/><path d="M29.0 460.2 L30.0 459.7 L31.0 459.6 L32.0 462.0 L33.0 459.0 L34.0 458.3 L35.0 459.9 L36.0 460.7 L37.0 459.2 L38.0 460.7 L39.0 461.0 L40.0 459.0 L41.0 461.8 L42.0 459.5 L43.0 460.6 L44.0 459.4 L45.0 459.1 L46.0 461.0 L47.0 460.4 L48.0 460.6 L49.0 460.2 L50.0 461.0 L51.0 461.5 L52.0 458.8 L53.0 459.4 L54.0 460.0 L55.0 460.9 L56.0 458.9 L57.0 460.9 L58.0 460.1 L59.0 462.0 L60.0 460.4 L61.0 460.6 L62.0 461.5 L63.0 459.8 L64.0 458.3 L65.0 459.5 L66.0 459.9 L67.0 460.6 L68.0 460.9 L69.0 458.8 L70.0 460.8 L71.0 462.0 L72.0 461.3 L73.0 462.5 L74.0 460.7 L75.0 458.7 L76.0 462.1 L77.0 461.5 L78.0 461.1 L79.0 462.5 L80.0 461.2 L81.0 459.0 L82.0 458.6 L83.0 458.7 L84.0 458.0 L85.0 459.8 L86.0 459.5 L87.0 461.5 L88.0 461.6 L89.0 461.3 L90.0 460.6 L91.0 461.9 L92.0 459.2 L93.0 461.5 L94.0 460.9 L95.0 458.8 L96.0 460.3 L97.0 458.3 L98.0 459.7 L99.0 461.1 L100.0 458.4 L101.0 457.7 L102.0 459.3 L103.0 459.2 L104.0 460.4 L105.0 459.3 L106.0 461.3 L107.0 459.5 L108.0 461.7 L109.0 462.5 L110.0 459.7 L111.0 459.9 L112.0 459.6 L113.0 460.0 L114.0 459.6 L115.0 461.5 L116.0 461.5 L117.0 459.9 L118.0 460.4 L119.0 459.0 L120.0 458.9 L121.0 459.2 L122.0 462.5 L123.0 461.0 L124.0 459.3 L125.0 459.9 L126.0 461.5 L127.0 461.0 L128.0 462.7 L129.0 462.9 L130.0 462.6 L131.0 460.0 L132.0 458.9 L133.0 461.2 L134.0 461.1 L135.0 459.9 L136.0 459.9 L137.0 459.1 L138.0 460.8 L139.0 461.5 L140.0 458.0 L141.0 458.0 L142.0 457.7 L143.0 457.2 L144.0 460.3 L145.0 457.3 L146.0 460.2 L147.0 458.0 L148.0 460.2 L149.0 459.4 L150.0 459.2 L151.0 458.6 L152.0 461.8 L153.0 462.7 L154.0 460.0 L155.0 461.3 L156.0 461.8 L157.0 463.1 L158.0 461.2 L159.0 460.5 L160.0 463.3 L161.0 460.8 L162.0 463.8 L163.0 460.5 L164.0 463.3 L165.0 460.6 L166.0 461.3 L167.0 464.0 L168.0 463.5 L169.0 460.5 L170.0 461.2 L171.0 461.3 L172.0 460.8 L173.0 460.3 L174.0 462.6 L175.0 463.7 L176.0 464.1 L177.0 463.2 L178.0 461.8 L179.0 460.5 L180.0 463.3 L181.0 464.2 L182.0 463.1 L183.0 463.4 L184.0 461.6 L185.0 460.5 L186.0 462.6 L187.0 461.9 L188.0 462.0 L189.0 463.1 L190.0 463.6 L191.0 463.4 L192.0 463.2 L193.0 460.8 L194.0 464.1 L195.0 462.9 L196.0 460.9 L197.0 461.5 L198.0 462.6 L199.0 465.0 L200.0 462.2 L201.0 464.2 L202.0 464.9 L203.0 462.7 L204.0 462.0 L205.0 462.8 L206.0 461.4 L207.0 461.9 L208.0 463.3 L209.0 463.9 L210.0 463.8 L211.0 463.2 L212.0 465.1 L213.0 462.4 L214.0 463.7 L215.0 463.0 L216.0 464.9 L217.0 462.4 L218.0 462.3 L219.0 460.5 L220.0 463.8 L221.0 461.9 L222.0 463.6 L223.0 460.4 L224.0 460.2 L225.0 462.2 L226.0 461.9 L227.0 462.6 L228.0 465.4 L229.0 463.0 L230.0 462.8 L231.0 459.7 L232.0 455.6 L233.0 454.3 L234.0 452.9 L235.0 451.5 L236.0 454.2 L237.0 452.0 L238.0 453.9 L239.0 454.9 L240.0 454.0 L241.0 453.3 L242.0 453.8 L243.0 452.7 L244.0 450.4 L245.0 450.7 L246.0 450.3 L247.0 450.6 L248.0 452.3 L249.0 452.0 L250.0 453.0 L251.0 452.4 L252.0 453.5 L253.0 453.8 L254.0 453.7 L255.0 452.9 L256.0 449.5 L257.0 448.2 L258.0 447.4 L259.0 449.4 L260.0 448.6 L261.0 451.9 L262.0 449.7 L263.0 448.2 L264.0 447.8 L265.0 450.3 L266.0 449.5 L267.0 448.8 L268.0 448.9 L269.0 451.7 L270.0 449.0 L271.0 450.9 L272.0 449.9 L273.0 451.0 L274.0 452.3 L275.0 450.9 L276.0 450.2 L277.0 451.5 L278.0 450.2 L279.0 449.5 L280.0 450.2 L281.0 451.1 L282.0 452.0 L283.0 452.2 L284.0 449.4 L285.0 451.6 L286.0 449.5 L287.0 449.5 L288.0 452.0 L289.0 450.8 L290.0 451.1 L291.0 449.7 L292.0 449.1 L293.0 450.4 L294.0 449.9 L295.0 449.5 L296.0 449.5 L297.0 449.3 L298.0 448.4 L299.0 449.8 L300.0 448.6 L301.0 450.2 L302.0 451.4 L303.0 450.4 L304.0 451.7 L305.0 450.6 L306.0 450.7 L307.0 449.2 L308.0 449.2 L309.0 451.3 L310.0 451.6 L311.0 450.7 L312.0 451.9 L313.0 450.6 L314.0 450.0 L315.0 451.7 L316.0 449.0 L317.0 448.2 L318.0 450.3 L319.0 449.1 L320.0 449.4 L321.0 451.8 L322.0 450.5 L323.0 451.1 L324.0 450.1 L325.0 450.2 L326.0 451.9 L327.0 452.3 L328.0 450.3 L329.0 451.1 L330.0 451.6 L331.0 449.9 L332.0 451.3 L333.0 450.0 L334.0 449.2 L335.0 450.6 L336.0 450.1 L337.0 451.6 L338.0 453.0 L339.0 453.1 L340.0 452.5 L341.0 450.4 L342.0 452.3 L343.0 453.0 L344.0 452.2 L345.0 450.5 L346.0 448.2 L347.0 449.4 L348.0 448.1 L349.0 450.5 L350.0 449.0 L351.0 449.8 L352.0 449.6 L353.0 448.1 L354.0 449.7 L355.0 450.1 L356.0 449.6 L357.0 449.2 L358.0 451.0 L359.0 451.9 L360.0 451.9 L361.0 450.8 L362.0 451.3 L363.0 451.5 L364.0 451.6 L365.0 451.3 L366.0 449.8 L367.0 447.9 L368.0 448.8 L369.0 449.2 L370.0 447.2 L371.0 449.2 L372.0 449.5 L373.0 447.7 L374.0 450.0 L375.0 449.5 L376.0 449.4 L377.0 450.6 L378.0 449.5 L379.0 449.9 L380.0 449.1 L381.0 448.2 L382.0 446.2 L383.0 448.9 L384.0 448.5 L385.0 447.1 L386.0 450.0 L387.0 447.0 L388.0 447.5 L389.0 448.1 L390.0 450.1 L391.0 449.3 L392.0 450.2 L393.0 449.7 L394.0 449.6 L395.0 450.1 L396.0 449.9 L397.0 447.7 L398.0 448.7 L399.0 447.5 L400.0 449.7 L401.0 447.5 L402.0 449.0 L403.0 449.4 L404.0 449.3 L405.0 447.4 L406.0 446.9 L407.0 447.3 L408.0 447.7 L409.0 449.5 L410.0 450.2 L411.0 449.6 L412.0 449.9 L413.0 449.7 L414.0 448.1 L415.0 449.5 L416.0 447.0 L417.0 447.7 L418.0 446.9 L419.0 449.0 L420.0 445.8 L421.0 447.9 L422.0 448.5 L423.0 448.0 L424.0 446.0 L425.0 446.3 L426.0 445.7 L427.0 445.3 L428.0 445.2 L429.0 446.6 L430.0 446.9 L431.0 446.2 L432.0 446.3 L433.0 447.9 L434.0 445.4 L435.0 444.1 L436.0 445.3 L437.0 444.7 L438.0 444.2 L439.0 444.6 L440.0 446.4 L441.0 444.3 L442.0 445.6 L443.0 445.7 L444.0 445.5 L445.0 445.4 L446.0 445.5 L447.0 447.8 L448.0 447.3 L449.0 449.5 L450.0 450.3 L451.0 450.8 L452.0 450.4 L453.0 449.9 L454.0 449.8 L455.0 449.7 L456.0 449.7 L457.0 449.6 L458.0 450.2 L459.0 450.3 L460.0 451.1 L461.0 450.1 L462.0 450.3 L463.0 450.9 L464.0 450.3 L465.0 450.3 L466.0 450.1 L467.0 450.9 L468.0 450.9 L469.0 451.3 L470.0 451.4 L471.0 451.5 L472.0 451.3 L473.0 451.1 L474.0 451.1 L475.0 450.0 L476.0 451.0 L477.0 450.3 L478.0 450.1 L479.0 450.8 L480.0 452.2 L481.0 451.3 L482.0 448.9 L483.0 447.3 L484.0 449.1 L485.0 447.9 L486.0 447.2 L487.0 446.6 L488.0 446.5 L489.0 447.8 L490.0 444.7 L491.0 445.9 L492.0 446.1 L493.0 444.2 L494.0 443.6 L495.0 444.5 L496.0 446.3 L497.0 446.6 L498.0 445.0 L499.0 444.2 L500.0 446.3 L501.0 446.3 L502.0 446.1 L503.0 444.2 L504.0 446.4 L505.0 445.6 L506.0 447.2 L507.0 448.2 L508.0 444.9 L509.0 447.6 L510.0 445.8 L511.0 445.2 L512.0 444.3 L513.0 445.1" stroke="#fff" stroke-width="1" fill="none"/></svg>
<div class="t" style="left:32.5px;top:294.5px;font:bold 15px/20px 'Liberation Sans',sans-serif;color:#6b6b6b;letter-spacing:-0.275px;">Upstream</div>
<div class="t" style="left:32.5px;top:367.5px;font:bold 15px/20px 'Liberation Sans',sans-serif;color:#6b6b6b;letter-spacing:-0.275px;">Upstream</div>
<div class="t" style="left:236px;top:367.5px;font:bold 15px/20px 'Liberation Sans',sans-serif;color:#626262;letter-spacing:-0.003px;height:10.500px;overflow:hidden;">Downstream</div>
<div class="t" style="left:234px;top:470.5px;font:bold 15.5px/20px 'Liberation Sans',sans-serif;color:#6c6c6c;letter-spacing:0.422px;">SNR Monitor</div>
<div class="t" style="left:31px;top:286px;font:10px/14px 'Liberation Sans',sans-serif;color:#d0d0d0;letter-spacing:-0.398px;">Bit Loading Values</div>
<div class="t" style="left:116.5px;top:286px;font:10px/14px 'Liberation Sans',sans-serif;color:#d8d8d8;letter-spacing:-0.311px;">bits per tone</div>
<div class="t" style="left:422.5px;top:286px;font:10px/14px 'Liberation Sans',sans-serif;color:#a8b0c0;letter-spacing:-0.150px;">http://modemhilfe.de.vu</div>
<div class="t" style="left:31px;top:358px;font:10px/14px 'Liberation Sans',sans-serif;color:#d0d0d0;letter-spacing:-0.336px;">SNR  dB per tone</div>
<div class="t" style="left:440.5px;top:357.5px;font:10px/14px 'Liberation Sans',sans-serif;color:#a8b0c0;letter-spacing:-0.127px;">http://dmt.mhilfe.de</div>
<div class="t" style="left:33px;top:397px;font:10px/14px 'DejaVu Sans Mono',monospace;color:#b4b46c;letter-spacing:-0.021px;">High:47dB</div>
<div class="t" style="left:33px;top:406.5px;font:10px/14px 'DejaVu Sans Mono',monospace;color:#b4b46c;letter-spacing:-0.021px;">Low :10dB</div>
<div class="t" style="left:31px;top:429px;font:10px/14px 'Liberation Sans',sans-serif;color:#9a9a9a;letter-spacing:-0.204px;">SNR fluctuation (in percent) over time</div>
<div class="t" style="left:431.5px;top:429px;font:10px/14px 'Liberation Sans',sans-serif;color:#a8b0c0;letter-spacing:-0.111px;">http://forum.mhilfe.de</div>
<div class="t" style="left:30.5px;top:478.5px;font:10px/14px 'Liberation Sans',sans-serif;color:#e08428;letter-spacing:-0.170px;">start 53</div>
<div class="t" style="left:81.5px;top:478.5px;font:10px/14px 'Liberation Sans',sans-serif;color:#e08428;letter-spacing:-0.297px;">curr.61</div>
<div class="t" style="left:132px;top:478.5px;font:10px/14px 'Liberation Sans',sans-serif;color:#e08428;letter-spacing:0.246px;">diff. 8</div>
<div class="t" style="left:179.5px;top:478.5px;font:10px/14px 'Liberation Sans',sans-serif;color:#e08428;letter-spacing:-0.820px;">15.09%</div>
<div class="t" style="left:25.5px;top:275.5px;width:40px;text-align:center;font:10px/12px 'Liberation Sans',sans-serif;color:#000">8</div>
<div class="t" style="left:25.5px;top:419px;width:40px;text-align:center;font:10px/12px 'Liberation Sans',sans-serif;color:#000">8</div>
<div class="t" style="left:57.5px;top:275.5px;width:40px;text-align:center;font:10px/12px 'Liberation Sans',sans-serif;color:#000">24</div>
<div class="t" style="left:57.5px;top:419px;width:40px;text-align:center;font:10px/12px 'Liberation Sans',sans-serif;color:#000">24</div>
<div class="t" style="left:89.5px;top:275.5px;width:40px;text-align:center;font:10px/12px 'Liberation Sans',sans-serif;color:#000">40</div>
<div class="t" style="left:89.5px;top:419px;width:40px;text-align:center;font:10px/12px 'Liberation Sans',sans-serif;color:#000">40</div>
<div class="t" style="left:121.5px;top:275.5px;width:40px;text-align:center;font:10px/12px 'Liberation Sans',sans-serif;color:#000">56</div>
<div class="t" style="left:121.5px;top:419px;width:40px;text-align:center;font:10px/12px 'Liberation Sans',sans-serif;color:#000">56</div>
<div class="t" style="left:153.5px;top:275.5px;width:40px;text-align:center;font:10px/12px 'Liberation Sans',sans-serif;color:#000">72</div>
<div class="t" style="left:153.5px;top:419px;width:40px;text-align:center;font:10px/12px 'Liberation Sans',sans-serif;color:#000">72</div>
<div class="t" style="left:185.5px;top:275.5px;width:40px;text-align:center;font:10px/12px 'Liberation Sans',sans-serif;color:#000">88</div>
<div class="t" style="left:185.5px;top:419px;width:40px;text-align:center;font:10px/12px 'Liberation Sans',sans-serif;color:#000">88</div>
<div class="t" style="left:217.5px;top:275.5px;width:40px;text-align:center;font:10px/12px 'Liberation Sans',sans-serif;color:#000">104</div>
<div class="t" style="left:217.5px;top:419px;width:40px;text-align:center;font:10px/12px 'Liberation Sans',sans-serif;color:#000">104</div>
<div class="t" style="left:249.5px;top:275.5px;width:40px;text-align:center;font:10px/12px 'Liberation Sans',sans-serif;color:#000">120</div>
<div class="t" style="left:249.5px;top:419px;width:40px;text-align:center;font:10px/12px 'Liberation Sans',sans-serif;color:#000">120</div>
<div class="t" style="left:281.5px;top:275.5px;width:40px;text-align:center;font:10px/12px 'Liberation Sans',sans-serif;color:#000">136</div>
<div class="t" style="left:281.5px;top:419px;width:40px;text-align:center;font:10px/12px 'Liberation Sans',sans-serif;color:#000">136</div>
<div class="t" style="left:313.5px;top:275.5px;width:40px;text-align:center;font:10px/12px 'Liberation Sans',sans-serif;color:#000">152</div>
<div class="t" style="left:313.5px;top:419px;width:40px;text-align:center;font:10px/12px 'Liberation Sans',sans-serif;color:#000">152</div>
<div class="t" style="left:345.5px;top:275.5px;width:40px;text-align:center;font:10px/12px 'Liberation Sans',sans-serif;color:#000">168</div>
<div class="t" style="left:345.5px;top:419px;width:40px;text-align:center;font:10px/12px 'Liberation Sans',sans-serif;color:#000">168</div>
<div class="t" style="left:377.5px;top:275.5px;width:40px;text-align:center;font:10px/12px 'Liberation Sans',sans-serif;color:#000">184</div>
<div class="t" style="left:377.5px;top:419px;width:40px;text-align:center;font:10px/12px 'Liberation Sans',sans-serif;color:#000">184</div>
<div class="t" style="left:409.5px;top:275.5px;width:40px;text-align:center;font:10px/12px 'Liberation Sans',sans-serif;color:#000">200</div>
<div class="t" style="left:409.5px;top:419px;width:40px;text-align:center;font:10px/12px 'Liberation Sans',sans-serif;color:#000">200</div>
<div class="t" style="left:441.5px;top:275.5px;width:40px;text-align:center;font:10px/12px 'Liberation Sans',sans-serif;color:#000">216</div>
<div class="t" style="left:441.5px;top:419px;width:40px;text-align:center;font:10px/12px 'Liberation Sans',sans-serif;color:#000">216</div>
<div class="t" style="left:473.5px;top:275.5px;width:40px;text-align:center;font:10px/12px 'Liberation Sans',sans-serif;color:#000">232</div>
<div class="t" style="left:473.5px;top:419px;width:40px;text-align:center;font:10px/12px 'Liberation Sans',sans-serif;color:#000">232</div>
<div class="t" style="left:496.5px;top:275.5px;width:40px;text-align:center;font:10px/12px 'Liberation Sans',sans-serif;color:#000">Tone</div>
<div class="t" style="left:496.5px;top:419px;width:40px;text-align:center;font:10px/12px 'Liberation Sans',sans-serif;color:#000">Tone</div>
<div class="t" style="left:25.5px;top:347px;width:40px;text-align:center;font:10px/12px 'Liberation Sans',sans-serif;color:#000">34</div>
<div class="t" style="left:57.5px;top:347px;width:40px;text-align:center;font:10px/12px 'Liberation Sans',sans-serif;color:#000">104</div>
<div class="t" style="left:89.5px;top:347px;width:40px;text-align:center;font:10px/12px 'Liberation Sans',sans-serif;color:#000">172</div>
<div class="t" style="left:121.5px;top:347px;width:40px;text-align:center;font:10px/12px 'Liberation Sans',sans-serif;color:#000">242</div>
<div class="t" style="left:153.5px;top:347px;width:40px;text-align:center;font:10px/12px 'Liberation Sans',sans-serif;color:#000">310</div>
<div class="t" style="left:185.5px;top:347px;width:40px;text-align:center;font:10px/12px 'Liberation Sans',sans-serif;color:#000">380</div>
<div class="t" style="left:217.5px;top:347px;width:40px;text-align:center;font:10px/12px 'Liberation Sans',sans-serif;color:#000">448</div>
<div class="t" style="left:249.5px;top:347px;width:40px;text-align:center;font:10px/12px 'Liberation Sans',sans-serif;color:#000">518</div>
<div class="t" style="left:281.5px;top:347px;width:40px;text-align:center;font:10px/12px 'Liberation Sans',sans-serif;color:#000">586</div>
<div class="t" style="left:313.5px;top:347px;width:40px;text-align:center;font:10px/12px 'Liberation Sans',sans-serif;color:#000">656</div>
<div class="t" style="left:345.5px;top:347px;width:40px;text-align:center;font:10px/12px 'Liberation Sans',sans-serif;color:#000">724</div>
<div class="t" style="left:377.5px;top:347px;width:40px;text-align:center;font:10px/12px 'Liberation Sans',sans-serif;color:#000">794</div>
<div class="t" style="left:409.5px;top:347px;width:40px;text-align:center;font:10px/12px 'Liberation Sans',sans-serif;color:#000">862</div>
<div class="t" style="left:441.5px;top:347px;width:40px;text-align:center;font:10px/12px 'Liberation Sans',sans-serif;color:#000">932</div>
<div class="t" style="left:475.5px;top:347px;width:40px;text-align:center;font:10px/12px 'Liberation Sans',sans-serif;color:#000">1000</div>
<div class="t" style="left:498px;top:347px;width:40px;text-align:center;font:10px/12px 'Liberation Sans',sans-serif;color:#000">kHz</div>
<div class="t" style="left:25.5px;top:491px;width:40px;text-align:center;font:10px/12px 'Liberation Sans',sans-serif;color:#000">19:29</div>
<div class="t" style="left:57.5px;top:491px;width:40px;text-align:center;font:10px/12px 'Liberation Sans',sans-serif;color:#000">19:37</div>
<div class="t" style="left:89.5px;top:491px;width:40px;text-align:center;font:10px/12px 'Liberation Sans',sans-serif;color:#000">19:45</div>
<div class="t" style="left:121.5px;top:491px;width:40px;text-align:center;font:10px/12px 'Liberation Sans',sans-serif;color:#000">19:53</div>
<div class="t" style="left:153.5px;top:491px;width:40px;text-align:center;font:10px/12px 'Liberation Sans',sans-serif;color:#000">20:01</div>
<div class="t" style="left:185.5px;top:491px;width:40px;text-align:center;font:10px/12px 'Liberation Sans',sans-serif;color:#000">20:09</div>
<div class="t" style="left:217.5px;top:491px;width:40px;text-align:center;font:10px/12px 'Liberation Sans',sans-serif;color:#000">20:17</div>
<div class="t" style="left:249.5px;top:491px;width:40px;text-align:center;font:10px/12px 'Liberation Sans',sans-serif;color:#000">20:25</div>
<div class="t" style="left:281.5px;top:491px;width:40px;text-align:center;font:10px/12px 'Liberation Sans',sans-serif;color:#000">20:33</div>
<div class="t" style="left:313.5px;top:491px;width:40px;text-align:center;font:10px/12px 'Liberation Sans',sans-serif;color:#000">20:41</div>
<div class="t" style="left:345.5px;top:491px;width:40px;text-align:center;font:10px/12px 'Liberation Sans',sans-serif;color:#000">20:49</div>
<div class="t" style="left:377.5px;top:491px;width:40px;text-align:center;font:10px/12px 'Liberation Sans',sans-serif;color:#000">20:57</div>
<div class="t" style="left:409.5px;top:491px;width:40px;text-align:center;font:10px/12px 'Liberation Sans',sans-serif;color:#000">21:05</div>
<div class="t" style="left:441.5px;top:491px;width:40px;text-align:center;font:10px/12px 'Liberation Sans',sans-serif;color:#000">21:13</div>
<div class="t" style="left:473.5px;top:491px;width:40px;text-align:center;font:10px/12px 'Liberation Sans',sans-serif;color:#000">21:21</div>
<div class="t" style="left:498.5px;top:491px;width:40px;text-align:center;font:10px/12px 'Liberation Sans',sans-serif;color:#000">time</div>
<div class="t" style="left:1.5px;top:284.5px;width:40px;text-align:center;font:10px/12px 'Liberation Sans',sans-serif;color:#000">14</div>
<div class="t" style="left:513.5px;top:284.5px;width:40px;text-align:center;font:10px/12px 'Liberation Sans',sans-serif;color:#000">14</div>
<div class="t" style="left:1.5px;top:296.5px;width:40px;text-align:center;font:10px/12px 'Liberation Sans',sans-serif;color:#000">11</div>
<div class="t" style="left:513.5px;top:296.5px;width:40px;text-align:center;font:10px/12px 'Liberation Sans',sans-serif;color:#000">11</div>
<div class="t" style="left:1.5px;top:308.5px;width:40px;text-align:center;font:10px/12px 'Liberation Sans',sans-serif;color:#000">8</div>
<div class="t" style="left:513.5px;top:308.5px;width:40px;text-align:center;font:10px/12px 'Liberation Sans',sans-serif;color:#000">8</div>
<div class="t" style="left:1.5px;top:320.5px;width:40px;text-align:center;font:10px/12px 'Liberation Sans',sans-serif;color:#000">5</div>
<div class="t" style="left:513.5px;top:320.5px;width:40px;text-align:center;font:10px/12px 'Liberation Sans',sans-serif;color:#000">5</div>
<div class="t" style="left:1.5px;top:332.5px;width:40px;text-align:center;font:10px/12px 'Liberation Sans',sans-serif;color:#000">2</div>
<div class="t" style="left:513.5px;top:332.5px;width:40px;text-align:center;font:10px/12px 'Liberation Sans',sans-serif;color:#000">2</div>
<div class="t" style="left:1.5px;top:362.5px;width:40px;text-align:center;font:10px/12px 'Liberation Sans',sans-serif;color:#000">50</div>
<div class="t" style="left:513.5px;top:362.5px;width:40px;text-align:center;font:10px/12px 'Liberation Sans',sans-serif;color:#000">50</div>
<div class="t" style="left:1.5px;top:372.5px;width:40px;text-align:center;font:10px/12px 'Liberation Sans',sans-serif;color:#000">40</div>
<div class="t" style="left:513.5px;top:372.5px;width:40px;text-align:center;font:10px/12px 'Liberation Sans',sans-serif;color:#000">40</div>
<div class="t" style="left:1.5px;top:382.5px;width:40px;text-align:center;font:10px/12px 'Liberation Sans',sans-serif;color:#000">30</div>
<div class="t" style="left:513.5px;top:382.5px;width:40px;text-align:center;font:10px/12px 'Liberation Sans',sans-serif;color:#000">30</div>
<div class="t" style="left:1.5px;top:392.5px;width:40px;text-align:center;font:10px/12px 'Liberation Sans',sans-serif;color:#000">20</div>
<div class="t" style="left:513.5px;top:392.5px;width:40px;text-align:center;font:10px/12px 'Liberation Sans',sans-serif;color:#000">20</div>
<div class="t" style="left:1.5px;top:402.5px;width:40px;text-align:center;font:10px/12px 'Liberation Sans',sans-serif;color:#000">10</div>
<div class="t" style="left:513.5px;top:402.5px;width:40px;text-align:center;font:10px/12px 'Liberation Sans',sans-serif;color:#000">10</div>
<div class="t" style="left:0;top:434.5px;width:27px;text-align:right;font:10px/12px 'Liberation Sans',sans-serif">20</div>
<div class="t" style="left:0;top:444.5px;width:27px;text-align:right;font:10px/12px 'Liberation Sans',sans-serif">10</div>
<div class="t" style="left:0;top:454.5px;width:27px;text-align:right;font:10px/12px 'Liberation Sans',sans-serif">0</div>
<div class="t" style="left:0;top:464.5px;width:27px;text-align:right;font:10px/12px 'Liberation Sans',sans-serif">-10</div>
<div class="t" style="left:0;top:474.5px;width:27px;text-align:right;font:10px/12px 'Liberation Sans',sans-serif">-20</div>
<div class="btn" style="left:28px;top:505px;width:54px;height:19px;line-height:18px;font-size:11px"><span><span style="letter-spacing:-1.227px">Reload</span></span></div>
<div class="cb" style="left:101px;top:508.5px;width:13px;height:13px;background:#D4D0C8;"><svg width="13" height="13" viewBox="0 0 13 13" style="position:absolute;left:0;top:0"><path d="M3 5v3l2 2l5-5v-3l-5 5z" fill="#808080" shape-rendering="crispEdges"/></svg></div>
<div class="t" style="left:118px;top:508.5px;font:11px/14px 'Liberation Sans',sans-serif;color:#808080;letter-spacing:0.045px;text-shadow:1px 1px 0 #fff;">extQuery</div>
<div class="cb" style="left:169.5px;top:508.5px;width:13px;height:13px;background:#D4D0C8;"></div>
<div class="t" style="left:186.5px;top:508.5px;font:11px/14px 'Liberation Sans',sans-serif;color:#808080;letter-spacing:0.219px;text-shadow:1px 1px 0 #fff;">snrft</div>
<div class="cb" style="left:218px;top:508.5px;width:13px;height:13px;background:#D4D0C8;"><svg width="13" height="13" viewBox="0 0 13 13" style="position:absolute;left:0;top:0"><path d="M3 5v3l2 2l5-5v-3l-5 5z" fill="#808080" shape-rendering="crispEdges"/></svg></div>
<div class="t" style="left:235px;top:508.5px;font:11px/14px 'Liberation Sans',sans-serif;color:#808080;letter-spacing:0.243px;text-shadow:1px 1px 0 #fff;">bitswap</div>
<div class="t" style="left:284.5px;top:508.5px;font:11px/14px 'Liberation Sans',sans-serif;color:#000;letter-spacing:-0.275px;">SNR-Monitor Interval:</div>
<div class="inp" style="left:386px;top:509px;width:19px;height:13px;line-height:13px;background:#fff;color:#000;font-size:10px;padding-left:3px">8</div>
<div class="t" style="left:407.5px;top:508.5px;font:10px/14px 'Liberation Sans',sans-serif;color:#000;letter-spacing:-0.854px;">sec</div>
<div class="btn" style="left:427px;top:505px;width:47.5px;height:19px;line-height:18px;font-size:11px"><span><span style="letter-spacing:-0.947px">Start</span></span></div>
<div class="btn def" style="left:479.5px;top:506px;width:45.5px;height:17px;line-height:16px;font-size:11px"><span class="dis"><span style="letter-spacing:-1.160px">Stop</span></span></div>
<div class="t" style="left:8.5px;top:532.5px;font:10px/14px 'Liberation Sans',sans-serif;color:#000;letter-spacing:-0.139px;">Information</div>
<div class="sunk" style="left:7px;top:545px;width:224px;height:52px;background:#D4D0C8;"></div>
<div class="t" style="left:10.5px;top:546px;font:9.5px/14px 'Liberation Sans',sans-serif;color:#808080;letter-spacing:0.076px;">adslctl version 1.0</div>
<div class="t" style="left:10.5px;top:557.5px;font:9.5px/14px 'Liberation Sans',sans-serif;color:#808080;letter-spacing:-0.011px;">ADSL PHY: AnnexA version - A2pB023b.d20e</div>
<div class="t" style="left:10.5px;top:569.5px;font:9.5px/14px 'Liberation Sans',sans-serif;color:#808080;letter-spacing:0.006px;">System Type: 96358GW-16</div>
<div class="grp" style="left:245.5px;top:545px;width:300px;height:51px;"></div><div class="abs" style="left:253px;top:544px;width:126.5px;height:4px;background:#D4D0C8"></div><div class="t" style="left:255px;top:539px;font:12px/14px 'Liberation Sans',sans-serif;color:#000;letter-spacing:-0.718px;">automatic DSL-Monitoring</div>
<div class="btn" style="left:257px;top:553px;width:87.5px;height:20px;line-height:19px;font-size:12px"><span><span style="letter-spacing:-0.519px">Aktivieren</span></span></div>
<div class="btn" style="left:353px;top:553px;width:87px;height:20px;line-height:19px;font-size:12px"><span class="dis"><span style="letter-spacing:-0.559px">Deaktivieren</span></span></div>
<div class="btn" style="left:449px;top:553px;width:87px;height:20px;line-height:19px;font-size:12px"><span><span style="letter-spacing:-0.709px">Konfiguration</span></span></div>
<div class="cb" style="left:271px;top:578px;width:13px;height:13px;background:#fff;"></div>
<div class="t" style="left:288px;top:577px;font:12px/14px 'Liberation Sans',sans-serif;color:#000;letter-spacing:-0.520px;">activate Auto-DSL-Monitoring on startup</div>
<div class="btn" style="left:20px;top:607px;width:99.5px;height:24px;line-height:23px;font-size:12px"><span><span style="letter-spacing:-0.576px">Refresh</span></span></div>
<div class="sunk1" style="left:145px;top:608px;width:592px;height:15px;background:#D4D0C8;"></div>
<div class="t" style="left:154.5px;top:623px;font:9.5px/14px 'Liberation Sans',sans-serif;color:#000;letter-spacing:0.135px;">http://dmt.mhilfe.de</div>
<div class="t" style="left:393.5px;top:623px;font:9.5px/14px 'Liberation Sans',sans-serif;color:#000;letter-spacing:0.120px;">http://modemhilfe.de.vu</div>
<div class="t" style="left:633.5px;top:623px;font:9.5px/14px 'Liberation Sans',sans-serif;color:#000;letter-spacing:0.148px;">http://forum.mhilfe.de</div>
<div class="btn" style="left:764px;top:606.5px;width:100px;height:25px;line-height:24px;font-size:13px"><span><span style="letter-spacing:-1.126px">DSL Resync.</span></span></div>
<div class="btn" style="left:889.5px;top:606.5px;width:109.5px;height:25px;line-height:24px;font-size:13px"><span class="dis"><span style="letter-spacing:-0.953px">Reboot/Resync</span></span></div>
<div class="abs" style="left:559px;top:60px;width:459px;height:540px;box-sizing:border-box;border-top:1px solid #fff;border-left:1px solid #fff;border-right:1px solid #404040;border-bottom:1px solid #404040;box-shadow:inset -1px -1px 0 #808080"></div>
<div class="abs" style="left:603.5px;top:43px;width:40.5px;height:17px;background:#D4D0C8;box-sizing:border-box;border-top:1px solid #fff;border-left:1px solid #fff;border-right:1px solid #404040;border-radius:2px 2px 0 0;box-shadow:inset -1px 0 0 #808080"></div><div class="t" style="left:608px;top:44.5px;font:12px/14px 'Liberation Sans',sans-serif;color:#000;letter-spacing:-0.341px;">Info2</div>
<div class="abs" style="left:644px;top:43px;width:42px;height:17px;background:#D4D0C8;box-sizing:border-box;border-top:1px solid #fff;border-left:1px solid #fff;border-right:1px solid #404040;border-radius:2px 2px 0 0;box-shadow:inset -1px 0 0 #808080"></div><div class="t" style="left:650px;top:44.5px;font:12px/14px 'Liberation Sans',sans-serif;color:#000;letter-spacing:-0.441px;">Info3</div>
<div class="abs" style="left:686px;top:43px;width:42px;height:17px;background:#D4D0C8;box-sizing:border-box;border-top:1px solid #fff;border-left:1px solid #fff;border-right:1px solid #404040;border-radius:2px 2px 0 0;box-shadow:inset -1px 0 0 #808080"></div><div class="t" style="left:692.5px;top:44.5px;font:12px/14px 'Liberation Sans',sans-serif;color:#000;letter-spacing:-1.062px;">CLI</div>
<div class="abs" style="left:728px;top:43px;width:42px;height:17px;background:#D4D0C8;box-sizing:border-box;border-top:1px solid #fff;border-left:1px solid #fff;border-right:1px solid #404040;border-radius:2px 2px 0 0;box-shadow:inset -1px 0 0 #808080"></div>
<div class="abs" style="left:559px;top:40.5px;width:44.5px;height:21px;background:#D4D0C8;box-sizing:border-box;border-top:1px solid #fff;border-left:1px solid #fff;border-right:1px solid #404040;border-radius:2px 2px 0 0;box-shadow:inset -1px 0 0 #808080"></div><div class="t" style="left:566px;top:42.5px;font:12px/14px 'Liberation Sans',sans-serif;color:#000;letter-spacing:-0.541px;">Info1</div>
<div class="t" style="left:565.5px;top:63px;font:9.5px/14px 'Liberation Sans',sans-serif;color:#000;letter-spacing:-0.002px;">Statistics</div>
<div class="sunk" style="left:565px;top:75px;width:446px;height:357px;background:#FFFFC0;"></div>
<div class="t mono" style="left:567px;top:83.5px">Counters</div>
<div class="t mono" style="left:663px;top:83.5px">Down</div>
<div class="t mono" style="left:759px;top:83.5px">Up</div>
<div class="t mono" style="left:567px;top:99.5px">SF:</div>
<div class="t mono" style="left:663px;top:99.5px">10841367</div>
<div class="t mono" style="left:807px;top:99.5px">10841313</div>
<div class="t mono" style="left:567px;top:107.5px">SFErr:</div>
<div class="t mono" style="left:663px;top:107.5px">214</div>
<div class="t mono" style="left:759px;top:107.5px">17</div>
<div class="t mono" style="left:567px;top:115.5px">RS:</div>
<div class="t mono" style="left:663px;top:115.5px">737212986</div>
<div class="t mono" style="left:807px;top:115.5px">184302321</div>
<div class="t mono" style="left:567px;top:123.5px">RSCorr:</div>
<div class="t mono" style="left:663px;top:123.5px">3760723</div>
<div class="t mono" style="left:759px;top:123.5px">19</div>
<div class="t mono" style="left:567px;top:131.5px">RSUnCorr:</div>
<div class="t mono" style="left:663px;top:131.5px">4190</div>
<div class="t mono" style="left:759px;top:131.5px">0</div>
<div class="t mono" style="left:567px;top:147.5px">HEC:</div>
<div class="t mono" style="left:663px;top:147.5px">171</div>
<div class="t mono" style="left:759px;top:147.5px">6</div>
<div class="t mono" style="left:567px;top:155.5px">OCD:</div>
<div class="t mono" style="left:663px;top:155.5px">5</div>
<div class="t mono" style="left:759px;top:155.5px">10</div>
<div class="t mono" style="left:567px;top:163.5px">LCD:</div>
<div class="t mono" style="left:663px;top:163.5px">0</div>
<div class="t mono" style="left:759px;top:163.5px">4</div>
<div class="t mono" style="left:567px;top:171.5px">Total Cells:</div>
<div class="t mono" style="left:663px;top:171.5px">3087939437</div>
<div class="t mono" style="left:567px;top:179.5px">Data Cells:</div>
<div class="t mono" style="left:663px;top:179.5px">4561001</div>
<div class="t mono" style="left:567px;top:187.5px">Drop Cells:</div>
<div class="t mono" style="left:663px;top:187.5px">0</div>
<div class="t mono" style="left:567px;top:195.5px">Bit Errors:</div>
<div class="t mono" style="left:663px;top:195.5px">0</div>
<div class="t mono" style="left:759px;top:195.5px">0</div>
<div class="t mono" style="left:567px;top:211.5px">ES:</div>
<div class="t mono" style="left:663px;top:211.5px">118</div>
<div class="t mono" style="left:759px;top:211.5px">0</div>
<div class="t mono" style="left:567px;top:219.5px">SES:</div>
<div class="t mono" style="left:663px;top:219.5px">2</div>
<div class="t mono" style="left:759px;top:219.5px">0</div>
<div class="t mono" style="left:567px;top:227.5px">UAS:</div>
<div class="t mono" style="left:663px;top:227.5px">13</div>
<div class="t mono" style="left:759px;top:227.5px">0</div>
<div class="t mono" style="left:567px;top:235.5px">AS:</div>
<div class="t mono" style="left:663px;top:235.5px">184303</div>
<div class="t mono" style="left:567px;top:251.5px">INP:</div>
<div class="t mono" style="left:663px;top:251.5px">1.14</div>
<div class="t mono" style="left:759px;top:251.5px">1.00</div>
<div class="t mono" style="left:567px;top:259.5px">PER:</div>
<div class="t mono" style="left:663px;top:259.5px">1.87</div>
<div class="t mono" style="left:759px;top:259.5px">1.85</div>
<div class="t mono" style="left:567px;top:267.5px">delay:</div>
<div class="t mono" style="left:663px;top:267.5px">8.57</div>
<div class="t mono" style="left:759px;top:267.5px">8.50</div>
<div class="t mono" style="left:567px;top:275.5px">OR:</div>
<div class="t mono" style="left:663px;top:275.5px">29.86</div>
<div class="t mono" style="left:759px;top:275.5px">30.11</div>
<div class="t mono" style="left:567px;top:291.5px">Bitswap:</div>
<div class="t mono" style="left:663px;top:291.5px">0</div>
<div class="t mono" style="left:759px;top:291.5px">0</div>
<div class="t mono" style="left:567px;top:315.5px">Total time = 1 days 3hours 12min 4sec</div>
<div class="t mono" style="left:567px;top:323.5px">SF  = 10841367   CRC = 214</div>
<div class="t mono" style="left:567px;top:331.5px">LOS = 0   LOF = 0   ES = 118</div>
<div class="t mono" style="left:567px;top:347.5px">Latest 1 day time = 3hours 12min 4sec</div>
<div class="t mono" style="left:567px;top:355.5px">SF  = 677851   CRC = 16</div>
<div class="t mono" style="left:567px;top:363.5px">LOS = 0   LOF = 0   ES = 15</div>
<div class="t mono" style="left:567px;top:379.5px">Previous 1 day time = 24hours 0sec</div>
<div class="t mono" style="left:567px;top:387.5px">SF  = 5082378   CRC = 83</div>
<div class="t mono" style="left:567px;top:395.5px">LOS = 0   LOF = 0   ES = 50</div>
<div class="t" style="left:660px;top:433px;font:10px/14px 'Liberation Sans',sans-serif;color:#000;letter-spacing:-0.219px;">Error Statistic (last 60 minutes/15min.intervals)</div>
<svg class="abs" style="left:660px;top:446px" width="196" height="80" viewBox="660 446 196 80" shape-rendering="crispEdges"><rect x="660" y="446" width="196" height="80" fill="#585858"/><path d="M682 455.5H834M682 465.5H834M682 475.5H834M682 485.5H834M682 495.5H834M682 505.5H834M682 515.5H834M682.5 455V516M712.7 455V516M742.9 455V516M773.1 455V516M803.3 455V516M833.5 455V516" stroke="#6e6e6e" fill="none"/><rect x="687" y="514" width="18" height="1" fill="#c8c860"/><rect x="705" y="513" width="2" height="2" fill="#202020"/><rect x="776" y="512" width="19" height="3" fill="#d8c8a8"/><rect x="796" y="512" width="2" height="3" fill="#202020"/><rect x="808" y="514" width="19" height="1" fill="#a8a8a8"/><rect x="682" y="448" width="5" height="5" fill="#dda0dd"/><rect x="713" y="448" width="5" height="5" fill="#c8d060"/><rect x="735.5" y="448" width="5" height="5" fill="#f09020"/><rect x="763.5" y="448" width="5" height="5" fill="#f04848"/><rect x="792" y="448" width="5" height="5" fill="#b0b8c4"/></svg>
<div class="t" style="left:688.5px;top:443.5px;font:11px/14px 'Liberation Sans',sans-serif;color:#dda0dd;letter-spacing:-1.281px;">CRC</div>
<div class="t" style="left:719.5px;top:443.5px;font:11px/14px 'Liberation Sans',sans-serif;color:#d0d868;letter-spacing:-1.844px;">ES</div>
<div class="t" style="left:741.5px;top:443.5px;font:11px/14px 'Liberation Sans',sans-serif;color:#f09020;letter-spacing:-1.469px;">LOF</div>
<div class="t" style="left:769.5px;top:443.5px;font:11px/14px 'Liberation Sans',sans-serif;color:#f04848;letter-spacing:-1.505px;">LOS</div>
<div class="t" style="left:798.7px;top:443.5px;font:11px/14px 'Liberation Sans',sans-serif;color:#b8c0cc;letter-spacing:-0.926px;">currCRC</div>
<div class="t" style="left:660px;top:449.5px;width:21px;text-align:right;font:11px/12px 'DejaVu Sans Mono',monospace;letter-spacing:-.6px;color:#e8e8e8">60</div>
<div class="t" style="left:835.5px;top:449.5px;width:21px;text-align:left;font:11px/12px 'DejaVu Sans Mono',monospace;letter-spacing:-.6px;color:#e8e8e8">60</div>
<div class="t" style="left:660px;top:459.5px;width:21px;text-align:right;font:11px/12px 'DejaVu Sans Mono',monospace;letter-spacing:-.6px;color:#e8e8e8">50</div>
<div class="t" style="left:835.5px;top:459.5px;width:21px;text-align:left;font:11px/12px 'DejaVu Sans Mono',monospace;letter-spacing:-.6px;color:#e8e8e8">50</div>
<div class="t" style="left:660px;top:469.5px;width:21px;text-align:right;font:11px/12px 'DejaVu Sans Mono',monospace;letter-spacing:-.6px;color:#e8e8e8">40</div>
<div class="t" style="left:835.5px;top:469.5px;width:21px;text-align:left;font:11px/12px 'DejaVu Sans Mono',monospace;letter-spacing:-.6px;color:#e8e8e8">40</div>
<div class="t" style="left:660px;top:479.5px;width:21px;text-align:right;font:11px/12px 'DejaVu Sans Mono',monospace;letter-spacing:-.6px;color:#e8e8e8">30</div>
<div class="t" style="left:835.5px;top:479.5px;width:21px;text-align:left;font:11px/12px 'DejaVu Sans Mono',monospace;letter-spacing:-.6px;color:#e8e8e8">30</div>
<div class="t" style="left:660px;top:489.5px;width:21px;text-align:right;font:11px/12px 'DejaVu Sans Mono',monospace;letter-spacing:-.6px;color:#e8e8e8">20</div>
<div class="t" style="left:835.5px;top:489.5px;width:21px;text-align:left;font:11px/12px 'DejaVu Sans Mono',monospace;letter-spacing:-.6px;color:#e8e8e8">20</div>
<div class="t" style="left:660px;top:499.5px;width:21px;text-align:right;font:11px/12px 'DejaVu Sans Mono',monospace;letter-spacing:-.6px;color:#e8e8e8">10</div>
<div class="t" style="left:835.5px;top:499.5px;width:21px;text-align:left;font:11px/12px 'DejaVu Sans Mono',monospace;letter-spacing:-.6px;color:#e8e8e8">10</div>
<div class="t" style="left:660px;top:509.5px;width:21px;text-align:right;font:11px/12px 'DejaVu Sans Mono',monospace;letter-spacing:-.6px;color:#e8e8e8">0</div>
<div class="t" style="left:835.5px;top:509.5px;width:21px;text-align:left;font:11px/12px 'DejaVu Sans Mono',monospace;letter-spacing:-.6px;color:#e8e8e8">0</div>
<div class="t" style="left:668.5px;top:515.5px;width:40px;text-align:center;font:11px/12px 'DejaVu Sans Mono',monospace;letter-spacing:-.6px;color:#e8e8e8">-60</div>
<div class="t" style="left:698.5px;top:515.5px;width:40px;text-align:center;font:11px/12px 'DejaVu Sans Mono',monospace;letter-spacing:-.6px;color:#e8e8e8">-45</div>
<div class="t" style="left:728.5px;top:515.5px;width:40px;text-align:center;font:11px/12px 'DejaVu Sans Mono',monospace;letter-spacing:-.6px;color:#e8e8e8">-30</div>
<div class="t" style="left:758.5px;top:515.5px;width:40px;text-align:center;font:11px/12px 'DejaVu Sans Mono',monospace;letter-spacing:-.6px;color:#e8e8e8">-15</div>
<div class="t" style="left:782.5px;top:515.5px;width:40px;text-align:center;font:11px/12px 'DejaVu Sans Mono',monospace;letter-spacing:-.6px;color:#e8e8e8">0</div>
<div class="t" style="left:812px;top:514px;font:11px/14px 'Liberation Sans',sans-serif;color:#e8e8e8;letter-spacing:-0.613px;">curr</div>
<div class="abs" style="left:869.5px;top:449px;width:3px;height:50px;box-sizing:border-box;border-left:1px solid #808080;border-top:1px solid #808080;background:#fff"></div>
<svg class="abs" style="left:862px;top:496px" width="22" height="12" viewBox="0 0 22 12"><path d="M0.500 0.500H15L20.500 6L15 11.500H0.500z" fill="#e8e6e0" stroke="#fff"/><path d="M0.500 11.500H15L20.500 6" fill="none" stroke="#404040"/><path d="M1.500 10.500H14.500L19.500 6" fill="none" stroke="#808080"/></svg>
<div class="abs" style="left:885px;top:454px;width:4px;height:1px;background:#000"></div>
<div class="t" style="left:893.5px;top:449px;font:10px/10px 'DejaVu Sans Mono',monospace;color:#808080;text-shadow:1px 1px 0 #fff">x64</div>
<div class="abs" style="left:885px;top:462px;width:4px;height:1px;background:#000"></div>
<div class="t" style="left:893.5px;top:457px;font:10px/10px 'DejaVu Sans Mono',monospace;color:#808080;text-shadow:1px 1px 0 #fff">x32</div>
<div class="abs" style="left:885px;top:470px;width:4px;height:1px;background:#000"></div>
<div class="t" style="left:893.5px;top:465px;font:10px/10px 'DejaVu Sans Mono',monospace;color:#808080;text-shadow:1px 1px 0 #fff">x16</div>
<div class="abs" style="left:885px;top:478px;width:4px;height:1px;background:#000"></div>
<div class="t" style="left:893.5px;top:473px;font:10px/10px 'DejaVu Sans Mono',monospace;color:#808080;text-shadow:1px 1px 0 #fff">x 8</div>
<div class="abs" style="left:885px;top:486px;width:4px;height:1px;background:#000"></div>
<div class="t" style="left:893.5px;top:481px;font:10px/10px 'DejaVu Sans Mono',monospace;color:#808080;text-shadow:1px 1px 0 #fff">x 4</div>
<div class="abs" style="left:885px;top:494px;width:4px;height:1px;background:#000"></div>
<div class="t" style="left:893.5px;top:489px;font:10px/10px 'DejaVu Sans Mono',monospace;color:#808080;text-shadow:1px 1px 0 #fff">x 2</div>
<div class="abs" style="left:885px;top:502px;width:4px;height:1px;background:#000"></div>
<div class="t" style="left:893.5px;top:497px;font:10px/10px 'DejaVu Sans Mono',monospace;color:#808080;text-shadow:1px 1px 0 #fff">x 1</div>
<div class="t" style="left:859px;top:512.5px;font:10px/14px 'Liberation Sans',sans-serif;color:#808080;letter-spacing:-0.137px;text-shadow:1px 1px 0 #fff;">scaling factor</div>
<div class="t" style="left:660px;top:526.5px;font:10px/14px 'Liberation Sans',sans-serif;color:#000;letter-spacing:-0.477px;">Gaps</div>
<div class="sunk" style="left:659px;top:540px;width:257px;height:51px;background:#D4D0C8;"></div>
<div class="t" style="left:661.500px;top:542px;font:10px/12px 'DejaVu Sans Mono',monospace;color:#808080">bit allocation not found</div>
<div class="abs" style="left:0;top:720px;width:1024px;height:17px;box-sizing:border-box;border-top:1px solid #808080;border-bottom:1px solid #fff;"></div>
<div class="t" style="left:496px;top:722px;font:11px/14px 'Liberation Sans',sans-serif;color:#000;letter-spacing:-0.359px;">Ready</div>
<div class="t" style="left:985px;top:722px;font:11px/14px 'Liberation Sans',sans-serif;color:#000;letter-spacing:0.016px;">v8.07</div>
<div class="abs" style="left:0;top:738px;width:1024px;height:30px;background:#D4D0C8;border-top:1px solid #fff;box-sizing:border-box"></div>
<div class="btn" style="left:2px;top:742px;width:52px;height:21px"></div>
<svg class="abs" style="left:5px;top:745px" width="16" height="15" viewBox="0 0 16 15"><path d="M1.500 3.500Q4 2 7 3.200L6.200 7.200Q3.500 6 .8 7.400z" fill="#e8502c"/><path d="M8 3.300Q11 4.500 14.500 2.800L13.600 6.800Q10.500 8.300 7.200 7.300z" fill="#58b848"/><path d="M.6 8.400Q3.300 7 6 8.200L5.200 12.200Q2.500 11-.2 12.400z" fill="#3c78d8"/><path d="M7 8.300Q10.300 9.400 13.400 7.800L12.500 11.800Q9.500 13.300 6.200 12.300z" fill="#f0c020"/></svg>
<div class="t" style="left:23px;top:746px;font:bold 11px/14px 'Liberation Sans',sans-serif;color:#000;letter-spacing:0.487px;">Start</div>
<div class="btn" style="left:59px;top:742px;width:159px;height:21px"></div>
<div class="abs" style="left:63px;top:745px;width:16px;height:16px;background:#36443a;border:1px solid #505850;box-sizing:border-box"></div>
<div class="t" style="left:67px;top:746px;font:bold 11px/14px 'Liberation Sans',sans-serif;color:#d8e838;">6</div>
<div class="t" style="left:82px;top:746px;font:11px/14px 'Liberation Sans',sans-serif;color:#000;letter-spacing:-0.009px;">RouterStats</div>
<div class="btn" style="left:222px;top:742px;width:160px;height:21px"></div>
<svg class="abs" style="left:226px;top:744px" width="18" height="18" viewBox="0 0 18 18"><circle cx="9" cy="9.500" r="6" fill="none" stroke="#2c7ce0" stroke-width="3"/><rect x="6" y="8.500" width="8" height="2" fill="#2c7ce0"/><rect x="10" y="11" width="6" height="2.500" fill="#D4D0C8"/><path d="M1.500 13Q4 3 16.500 2.500Q8 5 4 14z" fill="#f0b828"/></svg>
<div class="t" style="left:245px;top:746px;font:11px/14px 'Liberation Sans',sans-serif;color:#000;letter-spacing:-0.031px;">Rants and Raves | Com...</div>
<div class="abs" style="left:385px;top:742px;width:159px;height:21px;box-sizing:border-box;border:1px solid #404040;border-right-color:#fff;border-bottom-color:#fff;box-shadow:inset 1px 1px 0 #808080;background:#ebe9e4"></div>
<svg class="abs" style="left:389px;top:748px" width="16" height="12" viewBox="0 0 16 12"><path d="M0.500 6.500L6 3l9.500 1.200L10 8.500z" fill="#8fd0e8"/><path d="M0.500 6.500L10 8.500v1.800L0.500 8z" fill="#2a6f98"/><path d="M10 8.500l5.500-4.300v1.600L10 10.300z" fill="#1d5578"/></svg>
<div class="t" style="left:409.5px;top:746.5px;font:bold 11px/14px 'Liberation Sans',sans-serif;color:#000;letter-spacing:0.057px;">DMT</div>
<div class="sunk1" style="left:655px;top:742.5px;width:209px;height:20.5px;background:#fff;border-color:#686868 #e8e8e8 #e8e8e8 #686868;"></div>
<div class="t" style="left:661px;top:746px;font:12px/14px 'Liberation Sans',sans-serif;color:#808080;letter-spacing:-0.671px;">Search Desktop</div>
<div class="abs" style="left:841px;top:745px;width:22px;height:16px;background:linear-gradient(#f4f6fa,#c8d4e8)"></div>
<svg class="abs" style="left:845px;top:745px" width="16" height="16" viewBox="0 0 16 16"><circle cx="9.500" cy="5.500" r="3.500" fill="#dfeaff" stroke="#2858b0" stroke-width="1.600"/><path d="M7 8L2.500 12.500" stroke="#2858b0" stroke-width="2.200" stroke-linecap="round"/></svg>
<div class="abs" style="left:882px;top:746.5px;width:16px;height:15px;background:#0A246A"></div>
<div class="t" style="left:884px;top:747px;font:11px/14px 'Liberation Sans',sans-serif;color:#fff;letter-spacing:-1.641px;">EN</div>
<div class="abs" style="left:909.500px;top:742px;width:111.500px;height:21px;box-sizing:border-box;border:1px solid #808080;border-right-color:#fff;border-bottom-color:#fff"></div>
<div class="t" style="left:914px;top:746px;font:bold 13px/14px 'Liberation Sans',sans-serif;color:#000;">«</div>
<svg class="abs" style="left:926px;top:745px" width="18" height="17" viewBox="0 0 18 17"><path d="M2 4h4v11h-4z" fill="#e02020"/><path d="M6 3l8-2v13l-8 1z" fill="#e02020" stroke="#801010" stroke-width=".8"/><path d="M8 8l6-4v10l-6 1z" fill="#f0f0f0"/><path d="M2 14h12v2h-12z" fill="#601010"/></svg>
<svg class="abs" style="left:944px;top:745px" width="16" height="16" viewBox="0 0 16 16"><circle cx="8" cy="8" r="7" fill="#9a9a9a"/><circle cx="8" cy="8" r="4.500" fill="#585858"/><circle cx="7" cy="7" r="2" fill="#d0d0d0"/></svg>
<svg class="abs" style="left:962px;top:747px" width="17" height="13" viewBox="0 0 17 13"><rect x="1" y="1" width="15" height="11" fill="#fff" stroke="#1828c8" stroke-width="2"/><path d="M1 1l7.500 6L16 1M1 12l5.500-5M16 12l-5.500-5" fill="none" stroke="#1828c8" stroke-width="1.600"/></svg>
<div class="t" style="left:985px;top:746px;font:11px/14px 'Liberation Sans',sans-serif;color:#000;letter-spacing:0.094px;">21:26</div>
</body></html>
